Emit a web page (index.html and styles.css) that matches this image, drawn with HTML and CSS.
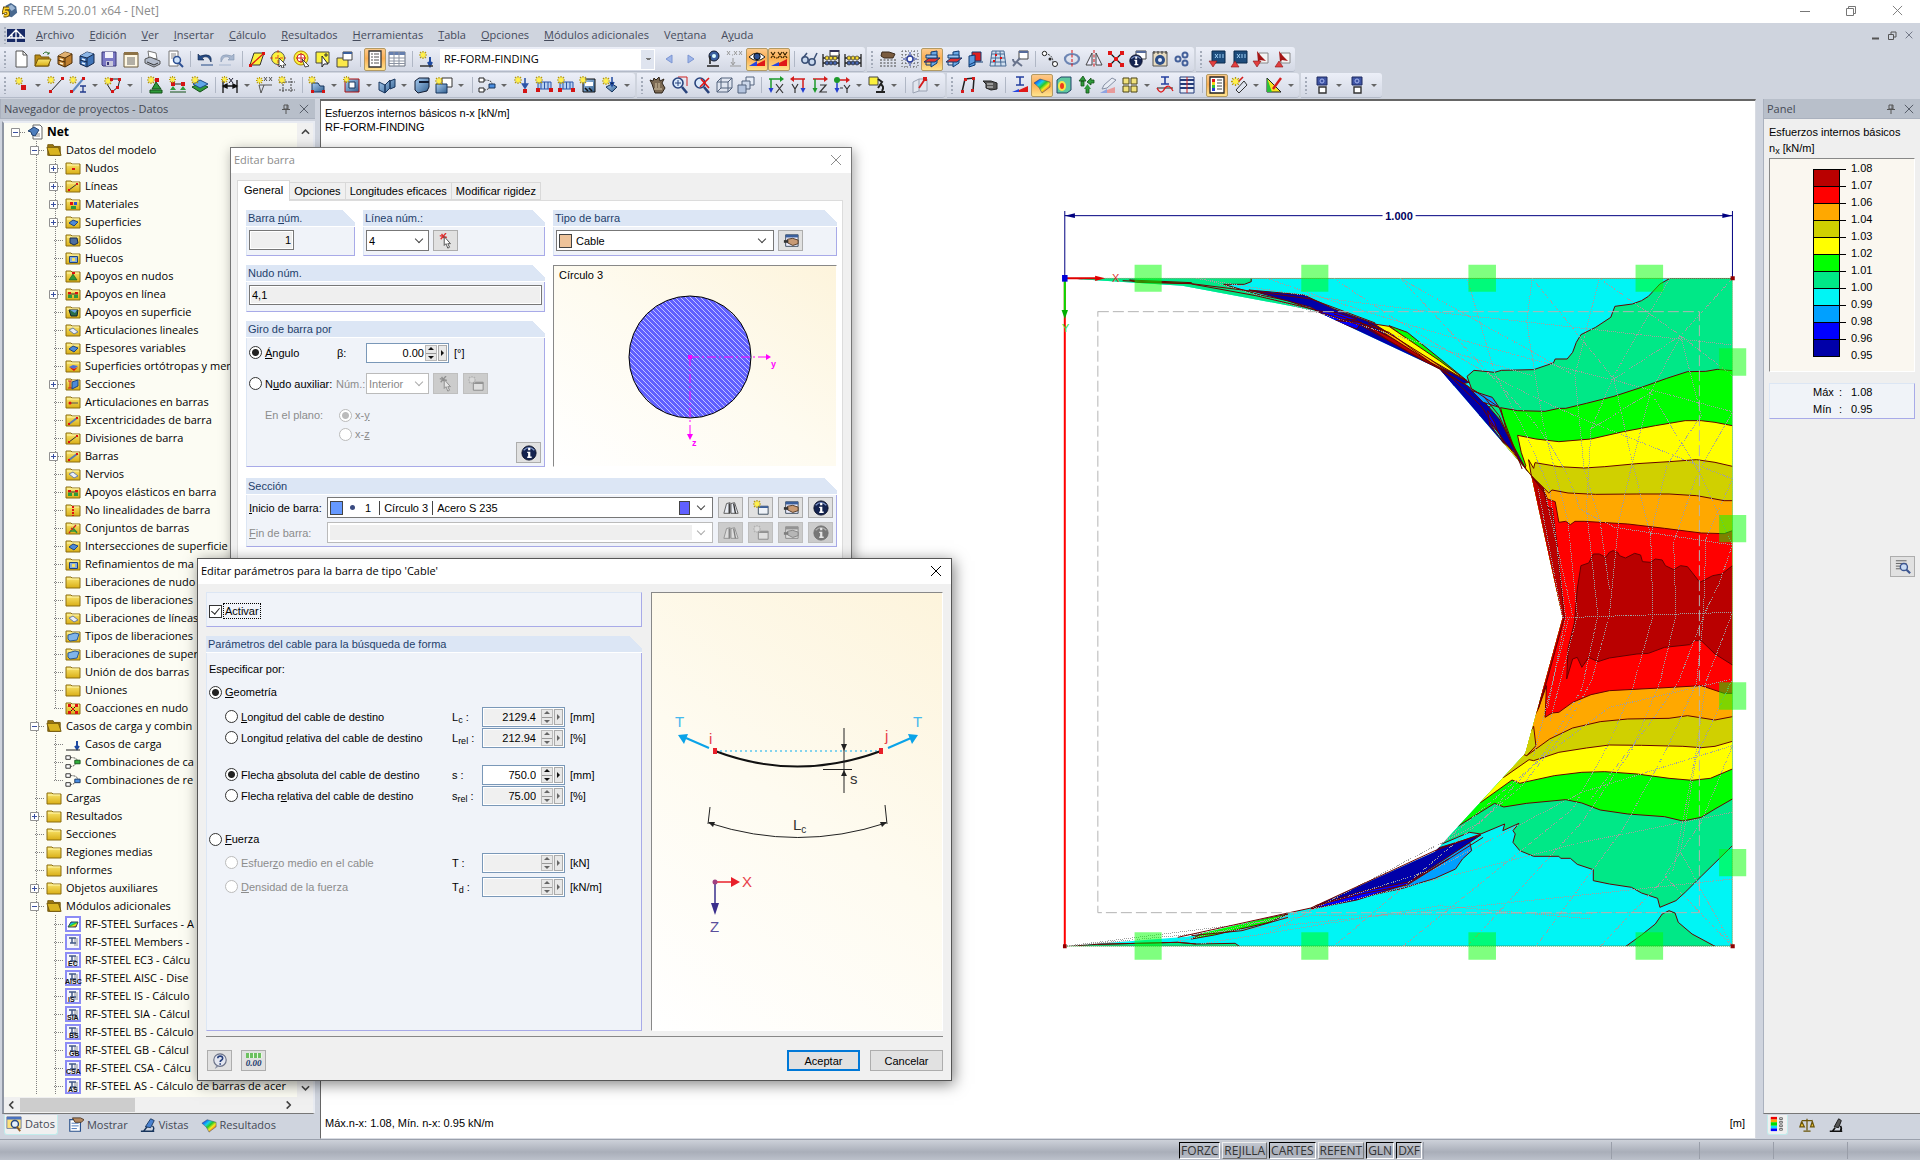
FILE: index.html
```html
<!DOCTYPE html>
<html lang="es">
<head>
<meta charset="utf-8">
<title>RFEM 5.20.01 x64 - [Net]</title>
<link rel="stylesheet" href="styles.css">
</head>
<body>
<svg class="sprite" aria-hidden="true">
<defs>
<linearGradient id="gold" x1="0" y1="0" x2="0" y2="1"><stop offset="0" stop-color="#fbe870"/><stop offset="1" stop-color="#d9ae16"/></linearGradient>
<linearGradient id="steel" x1="0" y1="0" x2="1" y2="1"><stop offset="0" stop-color="#a9cdf2"/><stop offset="1" stop-color="#33608f"/></linearGradient>
<linearGradient id="rainbow" x1="0" y1="0" x2="1" y2="1"><stop offset=".1" stop-color="#1530ff"/><stop offset=".35" stop-color="#16d0e8"/><stop offset=".5" stop-color="#28c828"/><stop offset=".65" stop-color="#f6ea20"/><stop offset=".9" stop-color="#f01818"/></linearGradient>
</defs>
<symbol id="star" viewBox="0 0 8 8"><path d="M4 0v8M0 4h8M1 1l6 6M7 1L1 7" stroke="#b79a00" stroke-width="1.2"/><circle cx="4" cy="4" r="2.4" fill="#fff04a"/></symbol>
<symbol id="app" viewBox="0 0 18 18"><path d="M4 3l6-3 6 4 1 7-6 5-4-1z" fill="#49698f"/><path d="M6 4l5-2 4 4-4 3z" fill="#9db6d3"/><path d="M8 6H3L2 10q5-2 5 2 0 3-5 2" fill="none" stroke="#5b4300" stroke-width="4"/><path d="M8 6H3L2 10q5-2 5 2 0 3-5 2" fill="none" stroke="#ffd22a" stroke-width="2"/></symbol>
<symbol id="logo" viewBox="0 0 18 13"><path d="M0 0h18v13H0z" fill="#182a66"/><path d="M0 9h18M9 0v13M9 1L1 9M9 1l8 8M5 5v4M13 5v4" stroke="#fff" stroke-width="1.3"/></symbol>
<symbol id="new" viewBox="0 0 18 18"><path d="M4 1h7l4 4v12H4z" fill="#fff" stroke="#555"/><path d="M11 1v4h4" fill="none" stroke="#555"/></symbol>
<symbol id="open" viewBox="0 0 18 18"><path d="M1 5h5l1 2h8v9H1z" fill="#b88a14" stroke="#74560a"/><path d="M4 9h13l-3 7H1z" fill="url(#gold)" stroke="#74560a"/><path d="M9 4q3-4 6 0m0-2v2h-2" fill="none" stroke="#2a6f2a"/></symbol>
<symbol id="drawer" viewBox="0 0 18 18"><path d="M2 6l7-4 7 2v9l-7 4-7-3z" fill="#c08030" stroke="#4a2c08"/><path d="M2 6l7-4 7 2-7 4z" fill="#e0b070"/><path d="M2 6l7 2v9M9 8l7-4M2 10l7 2" fill="none" stroke="#4a2c08"/><path d="M4 9l3 1M4 13l3 1" stroke="#fff0c8" stroke-width="1.4"/></symbol>
<symbol id="drawerb" viewBox="0 0 18 18"><path d="M2 6l7-4 7 2v9l-7 4-7-3z" fill="#3f74b8" stroke="#14284c"/><path d="M2 6l7-4 7 2-7 4z" fill="#8db6e6"/><path d="M2 6l7 2v9M9 8l7-4M2 10l7 2" fill="none" stroke="#14284c"/><path d="M4 9l3 1M4 13l3 1" stroke="#e4f0ff" stroke-width="1.4"/></symbol>
<symbol id="save" viewBox="0 0 18 18"><path d="M2 2h14v14H3l-1-1z" fill="#7a78c4" stroke="#3a3878"/><path d="M5 2h8v6H5z" fill="#f2f2fa"/><path d="M6 11h7v5H6z" fill="#c9c9dc"/><path d="M7 12h2v3H7z" fill="#3a3878"/></symbol>
<symbol id="report" viewBox="0 0 18 18"><path d="M2 3h14v14H2z" fill="#fff8e4" stroke="#6a5a3a"/><path d="M2 2h14v3H2z" fill="#8d7246"/><path d="M5 8h8M5 10h8M5 12h8M5 14h8" stroke="#666"/></symbol>
<symbol id="print" viewBox="0 0 18 18"><path d="M4 1l8 2 1 6-8-1z" fill="#fff" stroke="#777"/><path d="M1 9l5-2 10 4v3l-6 3-9-4z" fill="#b4bccb" stroke="#555"/><path d="M3 12l7 3 4-2" fill="none" stroke="#333"/></symbol>
<symbol id="preview" viewBox="0 0 18 18"><path d="M3 1h9v15H3z" fill="#fff" stroke="#777"/><path d="M5 4h5M5 6h5M5 8h3" stroke="#888"/><circle cx="11" cy="10" r="3.5" fill="#cfe3fa" stroke="#2c4f92" stroke-width="1.5"/><path d="M13 13l4 4" stroke="#2c4f92" stroke-width="2"/></symbol>
<symbol id="undo" viewBox="0 0 18 18"><path d="M2 4v6h6L6 8q6-4 9 4 2-10-11-6z" fill="#244a86" stroke="#14284c" stroke-width=".6"/><path d="M5 15h12" stroke="#244a86"/></symbol>
<symbol id="redo" viewBox="0 0 18 18"><path d="M16 4v6h-6l2-2q-6-4-9 4-2-10 11-6z" fill="#a9b8d0" stroke="#8193ae" stroke-width=".6"/><path d="M1 15h12" stroke="#a9b8d0"/></symbol>
<symbol id="selpoly" viewBox="0 0 18 18"><path d="M2 15L6 3h10l-4 12z" fill="#fbf23c" stroke="#333"/><path d="M3 15L15 4" stroke="#d11" stroke-width="1.2"/><path d="M1 14h3v3H1zM14 2h3v3h-3z" fill="#d11"/></symbol>
<symbol id="selcirc" viewBox="0 0 18 18"><circle cx="8" cy="8" r="6.5" fill="#fbf23c" stroke="#555"/><path d="M8 0v16M0 8h16" stroke="#e04a20" stroke-dasharray="3 2"/><path d="M9 8l7 7h-3l1 3-2 0-1-3-2 2z" fill="#fff" stroke="#222" stroke-width=".8"/></symbol>
<symbol id="seltarget" viewBox="0 0 18 18"><circle cx="9" cy="8" r="7" fill="#fbf23c" stroke="#b38a00"/><circle cx="9" cy="8" r="4" fill="#fff" stroke="#c22"/><path d="M9 3v10M4 8h10" stroke="#c22"/><path d="M10 9l7 7-4 1z" fill="#fff" stroke="#222" stroke-width=".8"/></symbol>
<symbol id="selwin" viewBox="0 0 18 18"><path d="M2 2h13v11H2z" fill="#fbf23c" stroke="#444"/><path d="M8 6l6 8-4 0-2 3z" fill="#fff" stroke="#222"/><path d="M12 3v4M10 5h4" stroke="#333"/></symbol>
<symbol id="newwin" viewBox="0 0 18 18"><path d="M1 8h11v9H1z" fill="#fbe94a" stroke="#444"/><path d="M7 2h9v8H7z" fill="#fff" stroke="#444"/><path d="M7 2h9v2H7z" fill="#3a5f9c"/></symbol>
<symbol id="navi" viewBox="0 0 18 18"><path d="M3 1h12v16H3z" fill="#fff" stroke="#333" stroke-width="1.3"/><path d="M5 4h2M5 7h2M5 10h2M5 13h2M8 4h5M8 7h5M8 10h5M8 13h5" stroke="#555" stroke-width="1.2"/></symbol>
<symbol id="grid" viewBox="0 0 18 18"><path d="M1 2h16v14H1z" fill="#fff" stroke="#68707e"/><path d="M1 2h16v3H1z" fill="#667fae"/><path d="M6 2v14M11 2v14M1 8h16M1 11h16M1 13.500h16" stroke="#8b93a2"/></symbol>
<symbol id="load" viewBox="0 0 18 18"><use href="#star" x="1" y="1" width="8" height="8"/><path d="M12 7v7M10 12l2 4 2-4" stroke="#1f4aa0" stroke-width="2" fill="#1f4aa0"/><path d="M2 16h13" stroke="#333" stroke-width="1.500"/></symbol>
<symbol id="prev" viewBox="0 0 18 18"><path d="M12 5v8L6 9z" fill="#9fb6ea" stroke="#7d96d2"/></symbol>
<symbol id="next" viewBox="0 0 18 18"><path d="M6 5v8l6-4z" fill="#9fb6ea" stroke="#7d96d2"/></symbol>
<symbol id="eyep" viewBox="0 0 18 18"><circle cx="10" cy="6" r="5" fill="#3a5fa0" stroke="#10182c"/><circle cx="10" cy="6" r="2" fill="#dff"/><path d="M6 6v8M3 16h12" stroke="#222" stroke-width="1.600"/></symbol>
<symbol id="xg" viewBox="0 0 18 18"><path d="M1 1l3 4M4 1L1 5M6 5h1M8 1l3 4M11 1L8 5M13 1l3 4M16 1l-3 4M7 8v6M5 12l2 3 2-3M4 16h11" stroke="#999" fill="none"/></symbol>
<symbol id="eye" viewBox="0 0 18 18"><path d="M1 7q8-8 16 0-8 7-16 0z" fill="#fff" stroke="#222"/><circle cx="9" cy="6.500" r="3.200" fill="#2c4f92" stroke="#111"/><path d="M1 16L9 11v5z" fill="#2646e0"/><path d="M9 16v-2l8-4v6z" fill="#e01818"/></symbol>
<symbol id="xxx" viewBox="0 0 18 18"><path d="M1 2l4 6M5 2L1 8M6 8h1.500M8 2l4 6M12 2L8 8M13 2l4 6M17 2l-4 6" stroke="#3a2400" stroke-width="1.200"/><path d="M1 16l8-4v4z" fill="#2646e0"/><path d="M9 16v-3l8-4v7z" fill="#e01818"/></symbol>
<symbol id="glass" viewBox="0 0 18 18"><circle cx="5" cy="10" r="3.200" fill="#c8d8ee" stroke="#3d5278" stroke-width="1.600"/><circle cx="12" cy="12" r="3.200" fill="#c8d8ee" stroke="#3d5278" stroke-width="1.600"/><path d="M3 8l4-5M14 9l3-6" stroke="#3d5278" stroke-width="1.600"/></symbol>
<symbol id="abacus" viewBox="0 0 18 18"><path d="M1 4v13M17 4v13M1 8h16M1 13h16" stroke="#222" stroke-width="1.300"/><g fill="#f3d52e" stroke="#333" stroke-width=".7"><circle cx="5" cy="8" r="2"/><circle cx="9" cy="8" r="2"/><circle cx="13" cy="8" r="2"/></g><g fill="#4765ad" stroke="#222" stroke-width=".7"><circle cx="5" cy="13" r="2"/><circle cx="9" cy="13" r="2"/><circle cx="13" cy="13" r="2"/></g></symbol>
<symbol id="abacus2" viewBox="0 0 18 18"><use href="#abacus" width="18" height="18"/><path d="M8 0h9v6H8z" fill="#fff" stroke="#333"/><path d="M8 0h9v2H8z" fill="#335"/></symbol>
<symbol id="hand" viewBox="0 0 18 18"><path d="M3 2h7l6 2-2 4H5L2 6z" fill="#7a5c40" stroke="#3a2a1c"/><path d="M1 10h16M1 13h16M1 16h16" stroke="#444" stroke-dasharray="2 1.500"/></symbol>
<symbol id="snap" viewBox="0 0 18 18"><path d="M1 1h16v16H1zM5 1v16M13 1v16M1 5h16M1 13h16" fill="none" stroke="#555" stroke-dasharray="1 2"/><path d="M9 2v14M2 9h14" stroke="#2c3f9c"/><circle cx="9" cy="9" r="3" fill="#fff" stroke="#2c3f9c" stroke-width="1.400"/></symbol>
<symbol id="planes" viewBox="0 0 18 18"><path d="M8 2l6-1v12l-6 4z" fill="#6aa9e6" stroke="#103a70"/><path d="M1 12l5-4h11l-5 4z" fill="#e03030" stroke="#103a70"/><path d="M3 5h11v3H3z" fill="#9cc8f4" stroke="#103a70"/><path d="M3 12v3h5" fill="none" stroke="#103a70"/></symbol>
<symbol id="planer" viewBox="0 0 18 18"><path d="M5 2h9v9H5z" fill="#e02020" stroke="#103a70"/><path d="M2 6l6-1v10l-6 2z" fill="#5c9ce0" stroke="#103a70"/><path d="M2 15l6-3h8" fill="none" stroke="#103a70"/></symbol>
<symbol id="mesh" viewBox="0 0 18 18"><path d="M3 1h12l2 15H1zM2 8h14M2 12h15M7 1L6 16M11 1l1 15M3 4h12" fill="#cfdff0" stroke="#476992"/><path d="M6 4h2v2H6zM11 7h2v2h-2zM4 10h2v2H4z" fill="#d11"/></symbol>
<symbol id="tools" viewBox="0 0 18 18"><path d="M8 1h9v8H8z" fill="#fff" stroke="#444"/><path d="M8 1h9v2H8z" fill="#556a9a"/><path d="M2 16l7-8M2 9q0 4 4 3l5 4" stroke="#69748c" stroke-width="2" fill="none"/></symbol>
<symbol id="nodes" viewBox="0 0 18 18"><path d="M4 4q8 0 8 9" fill="none" stroke="#333" stroke-dasharray="2 1"/><circle cx="3.500" cy="3.500" r="2.200" fill="#fff" stroke="#222"/><circle cx="9" cy="9" r="1.500" fill="#222"/><circle cx="14" cy="14" r="2.500" fill="#fff" stroke="#222"/></symbol>
<symbol id="rotate" viewBox="0 0 18 18"><ellipse cx="9" cy="9" rx="7" ry="5" fill="none" stroke="#6d86b4" stroke-width="2.200"/><path d="M9 0v18" stroke="#d11" stroke-dasharray="3 1.500"/></symbol>
<symbol id="mirror" viewBox="0 0 18 18"><path d="M7 3v12H1zM11 3v12h6z" fill="#eef" stroke="#444"/><path d="M9 0v18" stroke="#d11" stroke-dasharray="3 1.500"/></symbol>
<symbol id="xnode" viewBox="0 0 18 18"><path d="M3 3l12 12M15 3L3 15" stroke="#111" stroke-width="1.200"/><path d="M1 1h4v4H1zM13 1h4v4h-4zM1 13h4v4H1zM13 13h4v4h-4zM7 7h4v4H7z" fill="#e01616"/></symbol>
<symbol id="info" viewBox="0 0 18 18"><circle cx="9" cy="9" r="8" fill="#14234f" stroke="#0a1028"/><path d="M3 6q6-6 12 0" fill="none" stroke="#7f95c8" stroke-width="1.500"/><path d="M8 3.500h2.500v2.500H8zM7 7.500h3.500v5.500H12v1.500H7V13h1V9H7z" fill="#fff"/></symbol>
<symbol id="infow" viewBox="0 0 18 18"><path d="M7 1h10v8H7z" fill="#fff" stroke="#444"/><path d="M7 1h10v2H7z" fill="#556a9a"/><use href="#info" x="0" y="4" width="14" height="14"/></symbol>
<symbol id="clock" viewBox="0 0 18 18"><path d="M2 2h14v14H2z" fill="#e8dcc0" stroke="#555"/><circle cx="9" cy="10" r="5" fill="#2b4d88"/><circle cx="9" cy="10" r="2" fill="#e8eefa"/><path d="M3 1v3M7 1v3M11 1v3M15 1v3" stroke="#333"/></symbol>
<symbol id="gears" viewBox="0 0 18 18"><g fill="none" stroke="#44609a" stroke-width="2"><circle cx="5" cy="9" r="2.500" /><circle cx="12" cy="5" r="2.500"/><circle cx="12" cy="13" r="2.500"/></g></symbol>
<symbol id="xydown" viewBox="0 0 18 18"><path d="M4 1h13v12H4z" fill="#1d4c7c" stroke="#0b2a4c"/><path d="M7 4l3 4M10 4L7 8M12 4v4M15 4v4" stroke="#9fd0f5"/><path d="M1 11h8l-4 6z" fill="#e24040" stroke="#8a1414" stroke-width=".6"/></symbol>
<symbol id="xyup" viewBox="0 0 18 18"><path d="M4 1h13v12H4z" fill="#1d4c7c" stroke="#0b2a4c"/><path d="M7 4l3 4M10 4L7 8M12 4v4M15 4v4" stroke="#9fd0f5"/><path d="M1 17h8l-4-6z" fill="#e24040" stroke="#8a1414" stroke-width=".6"/></symbol>
<symbol id="pdfd" viewBox="0 0 18 18"><path d="M7 3h9v10H7z" fill="#f4f4f4" stroke="#888"/><path d="M5 1l4 5 5 5-6-1-2 2z" fill="#a41414"/><path d="M1 11h8l-4 6z" fill="#e24040" stroke="#8a1414" stroke-width=".6"/></symbol>
<symbol id="pdfu" viewBox="0 0 18 18"><path d="M7 3h9v10H7z" fill="#f4f4f4" stroke="#888"/><path d="M5 1l4 5 5 5-6-1-2 2z" fill="#a41414"/><path d="M1 17h8l-4-6z" fill="#e24040" stroke="#8a1414" stroke-width=".6"/></symbol>
<symbol id="node" viewBox="0 0 18 18"><use href="#star" x="3" y="1" width="8" height="8"/><path d="M9 9h5v5H9z" fill="#d41414"/></symbol>
<symbol id="line" viewBox="0 0 18 18"><use href="#star" x="0" y="0" width="8" height="8"/><path d="M4 15L15 3" stroke="#222"/><path d="M2 14h3v3H2zM14 1h3v3h-3z" fill="#d41414"/></symbol>
<symbol id="member" viewBox="0 0 18 18"><use href="#star" x="0" y="0" width="8" height="8"/><path d="M3 16L14 3" stroke="#5e87c0" stroke-width="2"/><path d="M13 1h3v3h-3zM1 14h3v3H1z" fill="#d41414"/><path d="M11 10h6M11 16h6M14 10v6" stroke="#223a8c" stroke-width="1.300"/></symbol>
<symbol id="arc" viewBox="0 0 18 18"><path d="M3 8l5 8 6-5 2-8H8" stroke="#222" fill="none"/><use href="#star" x="0" y="1" width="8" height="8"/><path d="M14 2h3v3h-3zM7 14h3v3H7zM12 10h3v3h-3zM6 2h3v3H6z" fill="#d41414"/></symbol>
<symbol id="support" viewBox="0 0 18 18"><path d="M9 6l5 7H5zM3 14h12v3H3z" fill="#2f9a3a" stroke="#145018"/><path d="M8 2h4v4H8z" fill="#d41414"/><use href="#star" x="0" y="0" width="8" height="8"/></symbol>
<symbol id="lsupport" viewBox="0 0 18 18"><path d="M3 8h12" stroke="#222"/><path d="M4 10l3 4H1zM14 10l3 4h-6z" fill="#2f9a3a"/><path d="M2 6h4v4H2zM12 6h4v4h-4z" fill="#d41414"/><path d="M1 16h16" stroke="#145018"/><use href="#star" x="0" y="0" width="7" height="7"/></symbol>
<symbol id="ssupport" viewBox="0 0 18 18"><path d="M1 11l8-4 8 4-8 5z" fill="#2f9a3a" stroke="#145018"/><path d="M2 8l7-4 8 4-8 4z" fill="#5fa6e8" stroke="#1c4b86"/><use href="#star" x="0" y="0" width="8" height="8"/></symbol>
<symbol id="dim" viewBox="0 0 18 18"><path d="M2 4v13M16 4v13M2 10h14M2 10l4-2v4zM16 10l-4-2v4z" stroke="#111" stroke-width="1.300"/><path d="M8 2l4 5M12 2L8 7" stroke="#223"/><use href="#star" x="0" y="0" width="7" height="7"/></symbol>
<symbol id="xx" viewBox="0 0 18 18"><use href="#star" x="0" y="1" width="7" height="7"/><path d="M8 1l3 4M11 1L8 5M13 1l3 4M16 1l-3 4M3 9h13M3 9l2 8M8 9l-3 8" stroke="#555" fill="none"/></symbol>
<symbol id="guides" viewBox="0 0 18 18"><path d="M5 2v15M13 2v15M1 6h16M1 14h16" stroke="#444" stroke-dasharray="2 1"/><use href="#star" x="0" y="0" width="8" height="8"/></symbol>
<symbol id="shape" viewBox="0 0 18 18"><path d="M4 7h6l2 3h4v6H4z" fill="url(#steel)" stroke="#17345c"/><path d="M14 14h3v3h-3zM3 14h3v3H3z" fill="#d41414"/><use href="#star" x="0" y="0" width="8" height="8"/></symbol>
<symbol id="hole" viewBox="0 0 18 18"><path d="M2 3h14v13H2z" fill="url(#steel)" stroke="#b01212"/><path d="M6 6h6v6H6z" fill="#fff" stroke="#17345c"/><use href="#star" x="0" y="0" width="7" height="7"/></symbol>
<symbol id="fold" viewBox="0 0 18 18"><path d="M1 6l6 3v8l-6-3zM7 9l5-5v8l-5 5zM12 5l5-2v8l-5 2z" fill="url(#steel)" stroke="#17345c"/></symbol>
<symbol id="solid" viewBox="0 0 18 18"><path d="M2 5l4-3h10v9l-2 4-9 2-3-3z" fill="url(#steel)" stroke="#101a30"/><path d="M6 6h10" stroke="#101a30" stroke-width="2"/></symbol>
<symbol id="solids" viewBox="0 0 18 18"><path d="M7 2h10v9H7z" fill="#fff" stroke="#333"/><path d="M1 8h11v9H1z" fill="url(#steel)" stroke="#17345c"/><use href="#star" x="0" y="1" width="8" height="8"/></symbol>
<symbol id="combo" viewBox="0 0 18 18"><path d="M1 2h5v4H1zM1 12h5v4H1z" fill="#fff" stroke="#222"/><path d="M6 4q8 0 8 4M6 14q4 0 6-3" fill="none" stroke="#333" stroke-dasharray="2 1"/><path d="M11 8h6v4h-6z" fill="#4a8de0" stroke="#17345c"/></symbol>
<symbol id="combog" viewBox="0 0 18 18"><path d="M1 2h5v4H1zM1 12h5v4H1z" fill="#fff" stroke="#222"/><path d="M6 4q8 0 8 4M6 14q4 0 6-3" fill="none" stroke="#333" stroke-dasharray="2 1"/><path d="M11 7h6v4h-6z" fill="#2fae3a" stroke="#145018"/></symbol>
<symbol id="nload" viewBox="0 0 18 18"><use href="#star" x="1" y="0" width="8" height="8"/><path d="M12 2v7M9.500 8l2.500 4 2.500-4z" stroke="#2c55a8" stroke-width="1.600" fill="#2c55a8"/><path d="M10 13h4v4h-4z" fill="#d41414"/></symbol>
<symbol id="lload" viewBox="0 0 18 18"><path d="M3 6h13v7H3z" fill="#b7d2f2" stroke="#2c55a8"/><path d="M6 6v7M9.500 6v7M13 6v7" stroke="#2c55a8"/><path d="M1 12h4v4H1zM14 12h4v4h-4z" fill="#d41414"/><use href="#star" x="0" y="0" width="8" height="8"/></symbol>
<symbol id="vload" viewBox="0 0 18 18"><path d="M4 3h12v13H4z" fill="url(#steel)" stroke="#111"/><path d="M6 6h8v4H6z" fill="#fff"/><path d="M6 12l3 3M10 12l3 3" stroke="#111" stroke-width="1.500"/><use href="#star" x="0" y="0" width="8" height="8"/></symbol>
<symbol id="gload" viewBox="0 0 18 18"><path d="M5 11l6-3 5 3-5 5z" fill="url(#steel)" stroke="#17345c"/><path d="M11 1v6M9 6l2 4 2-4" stroke="#1f4aa0" stroke-width="1.500"/><use href="#star" x="1" y="1" width="8" height="8"/></symbol>
<symbol id="pan" viewBox="0 0 18 18"><path d="M3 8L1 4l3 1 1-3 2 2 3-3 1 4 4-2-2 4 3 5-3 5H6z" fill="#7c6a54" stroke="#2e2419"/><path d="M7 7v5M10 7v5M5 13h8" stroke="#d8c8a8"/></symbol>
<symbol id="zoomw" viewBox="0 0 18 18"><path d="M7 1h9v9" fill="none" stroke="#c22"/><circle cx="7" cy="7" r="5" fill="#d9e9fb" stroke="#29437c" stroke-width="1.600"/><path d="M11 11l5 6" stroke="#29437c" stroke-width="2.600"/><path d="M7 4v6M4 7h6" stroke="#29437c"/></symbol>
<symbol id="zoomx" viewBox="0 0 18 18"><circle cx="7" cy="7" r="5" fill="#d9e9fb" stroke="#29437c" stroke-width="1.600"/><path d="M11 11l5 6" stroke="#29437c" stroke-width="2.600"/><path d="M8 3l8 9M16 2L7 11" stroke="#e01616" stroke-width="1.600"/></symbol>
<symbol id="cube" viewBox="0 0 18 18"><path d="M2 6l4-4h11v10l-4 4H2zM2 6h11v10M13 6l4-4M6 2v10h11M6 12l-4 4" fill="#dfe6f2" fill-opacity=".6" stroke="#53627c"/></symbol>
<symbol id="cubes" viewBox="0 0 18 18"><path d="M9 1h8v8H9z" fill="#e6ecf6" stroke="#53627c"/><path d="M5 5h8v8H5z" fill="#cdd8ea" stroke="#53627c"/><path d="M1 9h8v8H1z" fill="#b4c4de" stroke="#53627c"/></symbol>
<symbol id="viewx" viewBox="0 0 18 18"><path d="M2 3h12M4 3v12" stroke="#1d9a2b" stroke-width="1.500"/><path d="M13 0l4 3-4 3z" fill="#1d9a2b"/><path d="M1.500 12h5L4 17z" fill="#2440d0"/><path d="M9 8l7 9M16 8l-7 9" stroke="#333" stroke-width="1.200"/></symbol>
<symbol id="viewy" viewBox="0 0 18 18"><path d="M4 3h12M14 3v12" stroke="#d41c1c" stroke-width="1.500"/><path d="M5 0L1 3l4 3z" fill="#d41c1c"/><path d="M11.500 12h5L14 17z" fill="#2440d0"/><path d="M3 8l3 5 3-5M6 13v4" stroke="#333" stroke-width="1.200" fill="none"/></symbol>
<symbol id="viewz" viewBox="0 0 18 18"><path d="M2 3h12" stroke="#d41c1c" stroke-width="1.500"/><path d="M4 3v12" stroke="#1d9a2b" stroke-width="1.500"/><path d="M13 0l4 3-4 3z" fill="#d41c1c"/><path d="M1.500 12h5L4 17z" fill="#1d9a2b"/><path d="M9 9h6l-6 7h7" fill="none" stroke="#333" stroke-width="1.200"/></symbol>
<symbol id="viewm" viewBox="0 0 18 18"><path d="M5 4h9" stroke="#d41c1c" stroke-width="1.500"/><path d="M4 4v11" stroke="#2440d0" stroke-width="1.500"/><path d="M13 1l4 3-4 3z" fill="#d41c1c"/><path d="M1.500 12h5L4 17z" fill="#2440d0"/><circle cx="4" cy="4" r="3" fill="#1d9a2b"/><path d="M7 12h3M11 9l3 4 3-4M14 13v4" fill="none" stroke="#333" stroke-width="1.200"/></symbol>
<symbol id="micro" viewBox="0 0 18 18"><path d="M1 1h9v8H1z" fill="#fbf03c" stroke="#444"/><path d="M10 3l4 3-4 6M8 16h9M12 8q5 2 2 7" fill="none" stroke="#222" stroke-width="2"/></symbol>
<symbol id="clip" viewBox="0 0 18 18"><path d="M2 6l6-3v12l-6 2zM8 3h8v12H8" fill="#e2e6ee" stroke="#9aa2b2"/><path d="M8 12l6-9" stroke="#d41c1c" stroke-width="1.800"/><path d="M12 1h4v4h-4z" fill="#d41c1c"/></symbol>
<symbol id="frame" viewBox="0 0 18 18"><path d="M3 16L6 3l9-1-1 13" fill="none" stroke="#222" stroke-width="1.500"/><path d="M2 14h3v3H2zM5 2h3v3H5zM13 1h3v3h-3zM12 13h3v3h-3z" fill="#d41c1c"/></symbol>
<symbol id="cyl" viewBox="0 0 18 18"><path d="M2 5h8l6 2v6l-6 1-5-2V8z" fill="#555" stroke="#222"/><path d="M6 8h6M6 11h6" stroke="#ddd"/></symbol>
<symbol id="defm" viewBox="0 0 18 18"><path d="M5 1h8M9 1v8M5 9h8" stroke="#2440a0" stroke-width="1.600"/><path d="M1 16l7-3v3z" fill="#2646e0"/><path d="M8 16v-2l9-4v6z" fill="#e01818"/></symbol>
<symbol id="rain" viewBox="0 0 18 18"><path d="M1 7l6-4 10 3v5l-8 6q-2-6-8-10z" fill="url(#rainbow)" stroke="#345" stroke-width=".5"/></symbol>
<symbol id="raincube" viewBox="0 0 18 18"><path d="M2 4l4-3h10v13l-4 3H2z" fill="#5fc8a0" stroke="#246"/><ellipse cx="7" cy="10" rx="4" ry="5" fill="#f4e84a"/><ellipse cx="7" cy="10" rx="2" ry="3" fill="#ee3a1c"/></symbol>
<symbol id="reac" viewBox="0 0 18 18"><path d="M4 5h3v5H4zM2 5l4-5 3 5zM10 6l4-4v2h3v3h-3v2zM9 12h3v5H9z" fill="#2f9a3a" stroke="#145018" stroke-width=".8"/><path d="M7 13h7l-3.500-5z" fill="#2f9a3a"/></symbol>
<symbol id="pencil" viewBox="0 0 18 18"><path d="M5 9l8-7 4 2-9 8-5 1z" fill="#e8ecf4" stroke="#8790a4"/><path d="M1 17l7-4v4z" fill="#8fa4e0"/><path d="M8 17v-3l8-3v6z" fill="#e89a9a"/></symbol>
<symbol id="tiles" viewBox="0 0 18 18"><path d="M2 2h6v6H2zM10 2h6v6h-6zM2 10h6v6H2zM10 10h6v6h-6z" fill="#f1e27c" stroke="#4a4214"/></symbol>
<symbol id="isec" viewBox="0 0 18 18"><path d="M5 1h8M9 1v7M5 8h8" stroke="#2440a0" stroke-width="1.600"/><path d="M1 12h16" stroke="#222"/><path d="M1 12q4 8 8 0 4-5 8 3" fill="none" stroke="#e01818" stroke-width="1.300"/></symbol>
<symbol id="tab3" viewBox="0 0 18 18"><path d="M2 1h14v16H2z" fill="#e9eef8" stroke="#233a78"/><path d="M2 4h14M2 8h14M2 12h14" stroke="#233a78" stroke-width="2"/><path d="M9 1v16" stroke="#c22"/></symbol>
<symbol id="panel" viewBox="0 0 18 18"><path d="M2 1h14v16H2z" fill="#fff" stroke="#222" stroke-width="1.300"/><path d="M4 3h3v3H4z" fill="#e01818"/><path d="M4 6h3v3H4z" fill="#f5d516"/><path d="M4 9h3v3H4z" fill="#2bbf3a"/><path d="M4 12h3v3H4z" fill="#2440d0"/><path d="M9 4h5M9 7h5M9 10h5M9 13h5" stroke="#444"/></symbol>
<symbol id="wand" viewBox="0 0 18 18"><path d="M13 1L8 6" stroke="#d41c1c" stroke-width="1.600"/><path d="M6 14l8-9 3 4-8 8z" fill="#dde3ee" stroke="#333"/><use href="#star" x="1" y="1" width="9" height="9"/></symbol>
<symbol id="spectrum" viewBox="0 0 18 18"><path d="M2 2v14h14z" fill="#f5e520" stroke="#222"/><path d="M2 2v14h5z" fill="#2bbf3a"/><path d="M8 13L16 2" stroke="#d41c1c" stroke-width="2.400"/></symbol>
<symbol id="dev" viewBox="0 0 18 18"><path d="M4 1h10v8H4z" fill="#3f54a4" stroke="#1e2a60"/><circle cx="9" cy="5" r="2" fill="none" stroke="#a9b8f0"/><path d="M6 11h7v6H6z" fill="#fff" stroke="#333" stroke-width="1.400"/></symbol>
<symbol id="fold0" viewBox="0 0 16 16"><path d="M1 3h5l1 1h8v10H1z" fill="url(#gold)" stroke="#8a6c10"/><path d="M2 5h12" stroke="#fff6b0"/></symbol>
<symbol id="foldo" viewBox="0 0 18 16"><path d="M2 2h6l1 2h7v10H2z" fill="#a07c10" stroke="#6e540a"/><path d="M1 5h13l3 9H4z" fill="#d9b422" stroke="#6e540a"/></symbol>
<symbol id="net" viewBox="0 0 16 16"><path d="M6 1h7l2 2v12H6z" fill="#fff" stroke="#666"/><path d="M8 10h5M8 12h5" stroke="#888"/><path d="M1 7l6-4 5 3-4 6-3-1-1-3z" fill="#4d7dbc" stroke="#22406e"/></symbol>
<symbol id="plus" viewBox="0 0 9 9"><path d="M.5.5h8v8h-8z" fill="#fff" stroke="#919191"/><path d="M2 4.500h5M4.500 2v5" stroke="#3a50a0"/></symbol>
<symbol id="minus" viewBox="0 0 9 9"><path d="M.5.5h8v8h-8z" fill="#fff" stroke="#919191"/><path d="M2 4.500h5" stroke="#3a50a0"/></symbol>
<symbol id="f-node" viewBox="0 0 16 16"><use href="#fold0" width="16" height="16"/><path d="M7 8h3v2H7z" fill="#d11"/></symbol>
<symbol id="f-line" viewBox="0 0 16 16"><use href="#fold0" width="16" height="16"/><path d="M4 12l8-6" stroke="#333"/><path d="M3 11h2v2H3zM11 5h2v2h-2z" fill="#d11"/></symbol>
<symbol id="f-mat" viewBox="0 0 16 16"><use href="#fold0" width="16" height="16"/><path d="M5 6h3v3H5z" fill="#d11"/><path d="M9 6h3v3H9z" fill="#2a54d0"/><path d="M6 10h5v3H6z" fill="#2a9a3a"/></symbol>
<symbol id="f-surf" viewBox="0 0 16 16"><use href="#fold0" width="16" height="16"/><path d="M4 9l4-3 5 2-4 4z" fill="#4d8ad8" stroke="#1e4480"/></symbol>
<symbol id="f-orto" viewBox="0 0 16 16"><use href="#fold0" width="16" height="16"/><path d="M4 9l4-2 5 1-4 3z" fill="#4d6ed8"/><path d="M4 9l5 4 4-4-4 2z" fill="#d11"/></symbol>
<symbol id="f-solid" viewBox="0 0 16 16"><use href="#fold0" width="16" height="16"/><path d="M5 6h7l1 5-4 2-4-2z" fill="#4d6ea0" stroke="#1a2c50"/></symbol>
<symbol id="f-ssup" viewBox="0 0 16 16"><use href="#fold0" width="16" height="16"/><path d="M4 6h9l-1 6H6z" fill="#2a6e4a" stroke="#123"/><path d="M5 6h7l-2 3z" fill="#6aa4e0"/></symbol>
<symbol id="f-hole" viewBox="0 0 16 16"><use href="#fold0" width="16" height="16"/><path d="M4.500 6.500h8v6h-8z" fill="#88aedc" stroke="#1e4480"/><path d="M7 8h3v3H7z" fill="#f6e060"/></symbol>
<symbol id="f-sup" viewBox="0 0 16 16"><use href="#fold0" width="16" height="16"/><path d="M8 6l4 6H4z" fill="#2f9a3a" stroke="#145018" stroke-width=".6"/><path d="M7 4h3v2H7z" fill="#d11"/></symbol>
<symbol id="f-set" viewBox="0 0 16 16"><use href="#fold0" width="16" height="16"/><path d="M4 13l7-8M6 8l6 4" stroke="#c22" stroke-width="1.200"/><path d="M8 8l4 5M5 11h5" stroke="#2a9a3a" stroke-width="1.400"/></symbol>
<symbol id="f-lsup" viewBox="0 0 16 16"><use href="#fold0" width="16" height="16"/><path d="M3 8h10" stroke="#333"/><path d="M3 9h4v3H3zM9 9h4v3H9z" fill="#2f9a3a"/><path d="M3 6h3v2H3zM10 6h3v2h-3z" fill="#d11"/></symbol>
<symbol id="f-rel" viewBox="0 0 16 16"><use href="#fold0" width="16" height="16"/><path d="M4 8l4-2 5 4-4 2z" fill="#e8eefa" stroke="#6e7f9c"/></symbol>
<symbol id="f-bar" viewBox="0 0 16 16"><use href="#fold0" width="16" height="16"/><path d="M4 12l8-6" stroke="#5b7cae" stroke-width="2"/><path d="M3 11h2v2H3zM11 5h2v2h-2z" fill="#d11"/></symbol>
<symbol id="f-sec" viewBox="0 0 16 16"><use href="#fold0" width="16" height="16"/><path d="M3 5h4M3 12h4M5 5v7" stroke="#c22"/><path d="M7 6l6-2v6l-6 3z" fill="#4d8ad8" stroke="#1e4480"/></symbol>
<symbol id="f-art" viewBox="0 0 16 16"><use href="#fold0" width="16" height="16"/><path d="M5 9h8" stroke="#555"/><circle cx="5" cy="9" r="1.500" fill="#d11"/></symbol>
<symbol id="f-nl" viewBox="0 0 16 16"><use href="#fold0" width="16" height="16"/><path d="M8 4v10" stroke="#d11" stroke-width="2" stroke-dasharray="2 1"/></symbol>
<symbol id="f-co" viewBox="0 0 16 16"><use href="#fold0" width="16" height="16"/><path d="M4 5l8 8M12 5l-8 8" stroke="#111"/><path d="M3 4h3v3H3zM10 4h3v3h-3zM3 11h3v3H3zM10 11h3v3h-3zM7 8h2v2H7z" fill="#d11"/></symbol>
<symbol id="f-t" viewBox="0 0 16 16"><use href="#fold0" width="16" height="16"/><path d="M3 7l7-2 4 1-2 6-7 1-2-2z" fill="#7fb4ea" stroke="#2b5a94"/></symbol>
<symbol id="mod" viewBox="0 0 16 16"><path d="M1 1h14v14H1z" fill="#f4f5fb" stroke="#8c8cf5" stroke-width="2"/><path d="M9 4h4v8H9z" fill="#9aa0aa" fill-opacity=".6"/><path d="M4 4h7M7 4v5M5 9h6" stroke="#435a88" stroke-width="1.500"/></symbol>
<symbol id="pin" viewBox="0 0 10 10"><path d="M3 1h4v4H3zM1 5.500h8M5 6v4M6 1v4" fill="none" stroke="#555"/></symbol>
<symbol id="x" viewBox="0 0 12 12"><path d="M1 1l10 10M11 1L1 11" stroke="currentColor" fill="none"/></symbol>
<symbol id="chev" viewBox="0 0 10 6"><path d="M1 1l4 4 4-4" fill="none" stroke="currentColor" stroke-width="1.800"/></symbol>
<symbol id="pick" viewBox="0 0 18 18"><path d="M2 3l8 2M4 1l4 6M9 0L3 7" stroke="#e03030" stroke-width="1.500"/><path d="M7 4v10l2-2 2 5 2-1-2-4h3z" fill="#fff" stroke="#444"/></symbol>
<symbol id="edit" viewBox="0 0 18 18"><path d="M3 2h14v13H3z" fill="#eef" stroke="#345"/><path d="M3 2h14v3H3z" fill="#3a5f9c"/><path d="M5 7l6-1 6 2v4l-6 2-6-3z" fill="#c89a74" stroke="#4a3420"/><path d="M1 8h5v3H1z" fill="#333"/></symbol>
<symbol id="book" viewBox="0 0 18 18"><path d="M1 15L4 4l4-1v12z" fill="#e9edf4" stroke="#555"/><path d="M9 15V4l4-1 4 12z" fill="#e9edf4" stroke="#555"/><path d="M7 4v11M12 4l2 11" stroke="#333" stroke-width="1.500"/></symbol>
<symbol id="newbox" viewBox="0 0 18 18"><path d="M6 7h11v9H6z" fill="#eef2f8" stroke="#345"/><path d="M6 7h11v2H6z" fill="#3a5f9c"/><use href="#star" x="0" y="0" width="9" height="9"/></symbol>
<symbol id="help" viewBox="0 0 18 18"><circle cx="9" cy="8" r="7" fill="#e3e6f0" stroke="#6b7288" stroke-width="1.300"/><path d="M5 14l-2 4 5-3" fill="#8a90a4"/><path d="M6.500 6q0-2.500 2.700-2.500T12 6q0 1.500-1.500 2.200Q9.200 9 9.200 10.200M9.200 11.500v1.800" fill="none" stroke="#27407c" stroke-width="1.800"/></symbol>
<symbol id="lens" viewBox="0 0 18 18"><path d="M1 2h12M1 5h12M1 8h6M1 11h5" stroke="#555"/><circle cx="10" cy="9" r="4" fill="#c9dbf3" stroke="#3d5690" stroke-width="1.600"/><path d="M13 12l4 4" stroke="#3d5690" stroke-width="2.500"/></symbol>
<symbol id="t-data" viewBox="0 0 18 18"><path d="M1 1h16v13H1z" fill="#ffe27a" stroke="#6a7ca0"/><path d="M1 1h16v3H1z" fill="#4a72c0"/><circle cx="10" cy="9" r="4" fill="#e4f0fc" stroke="#27457c" stroke-width="1.600"/><path d="M12 12l4 5" stroke="#8c5a20" stroke-width="2"/></symbol>
<symbol id="t-show" viewBox="0 0 18 18"><path d="M2 3h12v13H2z" fill="#fff" stroke="#29508c" stroke-width="1.300"/><path d="M4 7h8M4 10h8M4 13h6" stroke="#3d6cb4"/><path d="M5 1h9l4 2-3 3H8z" fill="#b48a62" stroke="#4a3420"/></symbol>
<symbol id="t-view" viewBox="0 0 18 18"><path d="M6 11l6-9 4 2-4 8z" fill="#4a82d0" stroke="#17345c"/><path d="M1 16h15M4 16l4-5M14 16q3-3 0-6" stroke="#17345c" stroke-width="1.500" fill="none"/></symbol>
<symbol id="t-leg" viewBox="0 0 18 18"><path d="M2 1h7v3H2z" fill="#e00"/><path d="M2 4h7v3H2z" fill="#fa0"/><path d="M2 7h7v4H2z" fill="#0d0"/><path d="M2 11h7v3H2z" fill="#0df"/><path d="M2 14h7v3H2z" fill="#00f"/><path d="M12 2h3v2h-3zM12 6h3v2h-3zM12 10h3v2h-3zM12 14h3v2h-3z" fill="#fff" stroke="#555"/></symbol>
<symbol id="t-bal" viewBox="0 0 18 18"><path d="M9 2v13M3 4h12M5 16h8M3 5L1 11h5L3 5M15 5l-2 6h4z" fill="#e9c23a" stroke="#6a5408" stroke-width="1.400"/></symbol>
<symbol id="t-mic" viewBox="0 0 18 18"><path d="M7 11l5-9 3 2-3 8z" fill="#555" stroke="#111"/><path d="M2 16h14M5 16l3-4M14 16q2-3 0-6" stroke="#111" stroke-width="1.800" fill="none"/></symbol>
</svg>

<header class="titlebar">
  <svg class="ic"><use href="#app"/></svg><span class="apptitle">RFEM 5.20.01 x64 - [Net]</span>
  <div class="winbtns">
    <button aria-label="Minimizar"><svg width="10" height="10"><path d="M0 5.500h10" stroke="#777"/></svg></button>
    <button aria-label="Restaurar"><svg width="10" height="10"><path d="M.5 2.500h7v7h-7zM2.500 2.500v-2h7v7h-2" fill="none" stroke="#777"/></svg></button>
    <button aria-label="Cerrar"><svg width="11" height="11"><use href="#x"/></svg></button>
  </div>
</header>

<nav class="menubar">
  <i class="grip"></i><svg width="18" height="13" class="mlogo"><use href="#logo"/></svg>
  <a href="#"><u>A</u>rchivo</a><a href="#"><u>E</u>dición</a><a href="#"><u>V</u>er</a><a href="#"><u>I</u>nsertar</a><a href="#"><u>C</u>álculo</a><a href="#"><u>R</u>esultados</a><a href="#"><u>H</u>erramientas</a><a href="#"><u>T</u>abla</a><a href="#"><u>O</u>pciones</a><a href="#"><u>M</u>ódulos adicionales</a><a href="#">Ve<u>n</u>tana</a><a href="#">A<u>y</u>uda</a>
  <div class="mdi">
    <button><svg width="9" height="9"><path d="M1 7.500h7" stroke="#555" stroke-width="2"/></svg></button>
    <button><svg width="9" height="9"><path d="M.5 3.500h5v5h-5zM3 3V1h5v5H6" fill="none" stroke="#555"/></svg></button>
    <button><svg width="8" height="8"><use href="#x"/></svg></button>
  </div>
</nav>

<div class="toolrows">
<div class="toolrow">
  <div class="toolbar"><i class="grip"></i>
    <button class="tb"><svg><use href="#new"/></svg></button><button class="tb"><svg><use href="#open"/></svg></button><button class="tb"><svg><use href="#drawer"/></svg></button><button class="tb"><svg><use href="#drawerb"/></svg></button><button class="tb"><svg><use href="#save"/></svg></button><button class="tb"><svg><use href="#report"/></svg></button><button class="tb"><svg><use href="#print"/></svg></button><button class="tb"><svg><use href="#preview"/></svg></button><i class="sep"></i>
    <button class="tb"><svg><use href="#undo"/></svg></button><button class="tb"><svg><use href="#redo"/></svg></button><i class="sep"></i>
    <button class="tb"><svg><use href="#selpoly"/></svg></button><button class="tb"><svg><use href="#selcirc"/></svg></button><button class="tb"><svg><use href="#seltarget"/></svg></button><button class="tb"><svg><use href="#selwin"/></svg></button><button class="tb"><svg><use href="#newwin"/></svg></button><i class="sep"></i>
    <button class="tb on"><svg><use href="#navi"/></svg></button><button class="tb"><svg><use href="#grid"/></svg></button><i class="sep"></i>
    <button class="tb"><svg><use href="#load"/></svg></button>
    <select class="loadcase" aria-label="Caso de carga"><option>RF-FORM-FINDING</option></select>
    <button class="tb"><svg><use href="#prev"/></svg></button><button class="tb"><svg><use href="#next"/></svg></button><button class="tb"><svg><use href="#eyep"/></svg></button><button class="tb"><svg><use href="#xg"/></svg></button><button class="tb on"><svg><use href="#eye"/></svg></button><button class="tb on"><svg><use href="#xxx"/></svg></button><i class="sep"></i>
    <button class="tb"><svg><use href="#glass"/></svg></button><button class="tb"><svg><use href="#abacus2"/></svg></button><button class="tb"><svg><use href="#abacus"/></svg></button>
  </div>
  <div class="toolbar"><i class="grip"></i>
    <button class="tb"><svg><use href="#hand"/></svg></button><button class="tb"><svg><use href="#snap"/></svg></button><button class="tb on"><svg><use href="#planes"/></svg></button><button class="tb"><svg><use href="#planes"/></svg></button><button class="tb"><svg><use href="#planer"/></svg></button><button class="tb"><svg><use href="#mesh"/></svg></button><button class="tb"><svg><use href="#tools"/></svg></button><i class="sep"></i>
    <button class="tb"><svg><use href="#nodes"/></svg></button><button class="tb"><svg><use href="#rotate"/></svg></button><button class="tb"><svg><use href="#mirror"/></svg></button><button class="tb"><svg><use href="#xnode"/></svg></button><button class="tb"><svg><use href="#infow"/></svg></button><button class="tb"><svg><use href="#clock"/></svg></button><button class="tb"><svg><use href="#gears"/></svg></button>
  </div>
  <div class="toolbar"><i class="grip"></i>
    <button class="tb"><svg><use href="#xydown"/></svg></button><button class="tb"><svg><use href="#xyup"/></svg></button><button class="tb"><svg><use href="#pdfd"/></svg></button><button class="tb"><svg><use href="#pdfu"/></svg></button>
  </div>
</div>
<div class="toolrow">
  <div class="toolbar"><i class="grip"></i>
    <button class="tb dd"><svg><use href="#node"/></svg></button><button class="tb"><svg><use href="#line"/></svg></button><button class="tb dd"><svg><use href="#member"/></svg></button><button class="tb dd"><svg><use href="#arc"/></svg></button><i class="sep"></i>
    <button class="tb"><svg><use href="#support"/></svg></button><button class="tb"><svg><use href="#lsupport"/></svg></button><button class="tb"><svg><use href="#ssupport"/></svg></button><i class="sep"></i>
    <button class="tb dd"><svg><use href="#dim"/></svg></button><button class="tb"><svg><use href="#xx"/></svg></button><button class="tb"><svg><use href="#guides"/></svg></button><i class="sep"></i>
    <button class="tb dd"><svg><use href="#shape"/></svg></button><button class="tb dd"><svg><use href="#hole"/></svg></button><button class="tb dd"><svg><use href="#fold"/></svg></button><button class="tb"><svg><use href="#solid"/></svg></button><button class="tb dd"><svg><use href="#solids"/></svg></button><i class="sep"></i>
    <button class="tb dd"><svg><use href="#combo"/></svg></button><button class="tb"><svg><use href="#nload"/></svg></button><button class="tb"><svg><use href="#lload"/></svg></button><button class="tb"><svg><use href="#lload"/></svg></button><button class="tb"><svg><use href="#vload"/></svg></button><button class="tb dd"><svg><use href="#gload"/></svg></button>
  </div>
  <div class="toolbar"><i class="grip"></i>
    <button class="tb"><svg><use href="#pan"/></svg></button><button class="tb"><svg><use href="#zoomw"/></svg></button><button class="tb"><svg><use href="#zoomx"/></svg></button><button class="tb"><svg><use href="#cube"/></svg></button><button class="tb"><svg><use href="#cubes"/></svg></button><i class="sep"></i>
    <button class="tb"><svg><use href="#viewx"/></svg></button><button class="tb"><svg><use href="#viewy"/></svg></button><button class="tb"><svg><use href="#viewz"/></svg></button><button class="tb dd"><svg><use href="#viewm"/></svg></button><button class="tb dd"><svg><use href="#micro"/></svg></button><i class="sep"></i>
    <button class="tb dd"><svg><use href="#clip"/></svg></button>
  </div>
  <div class="toolbar"><i class="grip"></i>
    <button class="tb"><svg><use href="#frame"/></svg></button><button class="tb"><svg><use href="#cyl"/></svg></button><i class="sep"></i>
    <button class="tb"><svg><use href="#defm"/></svg></button><button class="tb on"><svg><use href="#rain"/></svg></button><button class="tb"><svg><use href="#raincube"/></svg></button><button class="tb"><svg><use href="#reac"/></svg></button><button class="tb"><svg><use href="#pencil"/></svg></button><button class="tb dd"><svg><use href="#tiles"/></svg></button><button class="tb"><svg><use href="#isec"/></svg></button><button class="tb"><svg><use href="#tab3"/></svg></button><i class="sep"></i>
    <button class="tb on"><svg><use href="#panel"/></svg></button><button class="tb dd"><svg><use href="#wand"/></svg></button><button class="tb dd"><svg><use href="#spectrum"/></svg></button>
  </div>
  <div class="toolbar"><i class="grip"></i>
    <button class="tb dd"><svg><use href="#dev"/></svg></button><button class="tb dd"><svg><use href="#dev"/></svg></button>
  </div>
</div>
</div>

<div class="main">
<aside class="navigator">
  <div class="dockhead"><span>Navegador de proyectos - Datos</span><svg width="10" height="10"><use href="#pin"/></svg><svg width="10" height="10"><use href="#x"/></svg></div>
  <div class="treebox">
    <div class="treeview">
    <ul class="tree l0"><li><div class="row"><i class="ex"><svg><use href="#minus"/></svg></i><svg class="ti"><use href="#net"/></svg><b>Net</b></div>
    <ul class="l1">
      <li><div class="row"><i class="ex"><svg><use href="#minus"/></svg></i><svg class="ti"><use href="#foldo"/></svg>Datos del modelo</div>
      <ul class="l2">
        <li class="row"><i class="ex"><svg><use href="#plus"/></svg></i><svg class="ti"><use href="#f-node"/></svg>Nudos</li>
        <li class="row"><i class="ex"><svg><use href="#plus"/></svg></i><svg class="ti"><use href="#f-line"/></svg>Líneas</li>
        <li class="row"><i class="ex"><svg><use href="#plus"/></svg></i><svg class="ti"><use href="#f-mat"/></svg>Materiales</li>
        <li class="row"><i class="ex"><svg><use href="#plus"/></svg></i><svg class="ti"><use href="#f-surf"/></svg>Superficies</li>
        <li class="row"><i class="ex"></i><svg class="ti"><use href="#f-solid"/></svg>Sólidos</li>
        <li class="row"><i class="ex"></i><svg class="ti"><use href="#f-hole"/></svg>Huecos</li>
        <li class="row"><i class="ex"></i><svg class="ti"><use href="#f-sup"/></svg>Apoyos en nudos</li>
        <li class="row"><i class="ex"><svg><use href="#plus"/></svg></i><svg class="ti"><use href="#f-lsup"/></svg>Apoyos en línea</li>
        <li class="row"><i class="ex"></i><svg class="ti"><use href="#f-ssup"/></svg>Apoyos en superficie</li>
        <li class="row"><i class="ex"></i><svg class="ti"><use href="#f-rel"/></svg>Articulaciones lineales</li>
        <li class="row"><i class="ex"></i><svg class="ti"><use href="#f-surf"/></svg>Espesores variables</li>
        <li class="row"><i class="ex"></i><svg class="ti"><use href="#f-orto"/></svg>Superficies ortótropas y mem</li>
        <li class="row"><i class="ex"><svg><use href="#plus"/></svg></i><svg class="ti"><use href="#f-sec"/></svg>Secciones</li>
        <li class="row"><i class="ex"></i><svg class="ti"><use href="#f-art"/></svg>Articulaciones en barras</li>
        <li class="row"><i class="ex"></i><svg class="ti"><use href="#f-bar"/></svg>Excentricidades de barra</li>
        <li class="row"><i class="ex"></i><svg class="ti"><use href="#f-line"/></svg>Divisiones de barra</li>
        <li class="row"><i class="ex"><svg><use href="#plus"/></svg></i><svg class="ti"><use href="#f-bar"/></svg>Barras</li>
        <li class="row"><i class="ex"></i><svg class="ti"><use href="#f-rel"/></svg>Nervios</li>
        <li class="row"><i class="ex"></i><svg class="ti"><use href="#f-lsup"/></svg>Apoyos elásticos en barra</li>
        <li class="row"><i class="ex"></i><svg class="ti"><use href="#f-nl"/></svg>No linealidades de barra</li>
        <li class="row"><i class="ex"></i><svg class="ti"><use href="#f-set"/></svg>Conjuntos de barras</li>
        <li class="row"><i class="ex"></i><svg class="ti"><use href="#f-surf"/></svg>Intersecciones de superficie</li>
        <li class="row"><i class="ex"></i><svg class="ti"><use href="#f-hole"/></svg>Refinamientos de ma</li>
        <li class="row"><i class="ex"></i><svg class="ti"><use href="#fold0"/></svg>Liberaciones de nudo</li>
        <li class="row"><i class="ex"></i><svg class="ti"><use href="#fold0"/></svg>Tipos de liberaciones</li>
        <li class="row"><i class="ex"></i><svg class="ti"><use href="#f-rel"/></svg>Liberaciones de líneas</li>
        <li class="row"><i class="ex"></i><svg class="ti"><use href="#f-t"/></svg>Tipos de liberaciones</li>
        <li class="row"><i class="ex"></i><svg class="ti"><use href="#f-t"/></svg>Liberaciones de super</li>
        <li class="row"><i class="ex"></i><svg class="ti"><use href="#fold0"/></svg>Unión de dos barras</li>
        <li class="row"><i class="ex"></i><svg class="ti"><use href="#fold0"/></svg>Uniones</li>
        <li class="row"><i class="ex"></i><svg class="ti"><use href="#f-co"/></svg>Coacciones en nudo</li>
      </ul></li>
      <li><div class="row"><i class="ex"><svg><use href="#minus"/></svg></i><svg class="ti"><use href="#foldo"/></svg>Casos de carga y combin</div>
      <ul class="l2">
        <li class="row"><i class="ex"></i><svg class="ti"><path d="M12 5v7M10 10l2 3 2-3" stroke="#1f4aa0" fill="none" stroke-width="2"/><path d="M1 14h14" stroke="#222"/></svg>Casos de carga</li>
        <li class="row"><i class="ex"></i><svg class="ti"><use href="#combog"/></svg>Combinaciones de ca</li>
        <li class="row"><i class="ex"></i><svg class="ti"><use href="#combo"/></svg>Combinaciones de re</li>
      </ul></li>
      <li class="row"><i class="ex"></i><svg class="ti"><use href="#fold0"/></svg>Cargas</li>
      <li class="row"><i class="ex"><svg><use href="#plus"/></svg></i><svg class="ti"><use href="#fold0"/></svg>Resultados</li>
      <li class="row"><i class="ex"></i><svg class="ti"><use href="#fold0"/></svg>Secciones</li>
      <li class="row"><i class="ex"></i><svg class="ti"><use href="#fold0"/></svg>Regiones medias</li>
      <li class="row"><i class="ex"></i><svg class="ti"><use href="#fold0"/></svg>Informes</li>
      <li class="row"><i class="ex"><svg><use href="#plus"/></svg></i><svg class="ti"><use href="#fold0"/></svg>Objetos auxiliares</li>
      <li><div class="row"><i class="ex"><svg><use href="#minus"/></svg></i><svg class="ti"><use href="#foldo"/></svg>Módulos adicionales</div>
      <ul class="l2 open">
        <li class="row"><i class="ex"></i><svg class="ti"><path d="M1 1h14v14H1z" fill="#fff" stroke="#8c8cf5" stroke-width="2"/><path d="M3 11l3-5h7l-2 5z" fill="url(#rainbow)" stroke="#345"/></svg>RF-STEEL Surfaces - A</li>
        <li class="row"><i class="ex"></i><svg class="ti"><use href="#mod"/></svg>RF-STEEL Members -</li>
        <li class="row"><i class="ex"></i><svg class="ti"><use href="#mod"/><text x="3" y="14">EC</text></svg>RF-STEEL EC3 - Cálcu</li>
        <li class="row"><i class="ex"></i><svg class="ti"><use href="#mod"/><text x="0" y="14">AISC</text></svg>RF-STEEL AISC - Dise</li>
        <li class="row"><i class="ex"></i><svg class="ti"><use href="#mod"/><text x="3" y="14">IS</text></svg>RF-STEEL IS - Cálculo</li>
        <li class="row"><i class="ex"></i><svg class="ti"><use href="#mod"/><text x="2" y="14">SIA</text></svg>RF-STEEL SIA - Cálcul</li>
        <li class="row"><i class="ex"></i><svg class="ti"><use href="#mod"/><text x="4" y="14">BS</text></svg>RF-STEEL BS - Cálculo</li>
        <li class="row"><i class="ex"></i><svg class="ti"><use href="#mod"/><text x="4" y="14">GB</text></svg>RF-STEEL GB - Cálcul</li>
        <li class="row"><i class="ex"></i><svg class="ti"><use href="#mod"/><text x="1" y="14">CSA</text></svg>RF-STEEL CSA - Cálcu</li>
        <li class="row"><i class="ex"></i><svg class="ti"><use href="#mod"/><text x="3" y="14">AS</text></svg>RF-STEEL AS - Cálculo de barras de acer</li>
      </ul></li>
    </ul></li></ul>
    <div class="vscroll"><svg class="up"><use href="#chev"/></svg><svg><use href="#chev"/></svg></div>
    </div>
    <div class="hscroll"><svg class="lf"><use href="#chev"/></svg><i class="thumb"></i><svg class="rt"><use href="#chev"/></svg></div>
  </div>
  <div class="docktabs">
    <button class="sel"><svg class="ic"><use href="#t-data"/></svg>Datos</button><button><svg class="ic"><use href="#t-show"/></svg>Mostrar</button><button><svg class="ic"><use href="#t-view"/></svg>Vistas</button><button><svg class="ic"><use href="#rain"/></svg>Resultados</button>
  </div>
</aside>

<main class="canvas">
  <p>Esfuerzos internos básicos n-x [kN/m]<br>RF-FORM-FINDING</p>
  <svg class="plot" width="720" height="780" viewBox="0 0 720 780">
    <defs>
      <clipPath id="outline"><path d="M54 268H1508V2272H54L320 2243 590 2157 860 1988 1057 1693 1138 1286 1070 860 870 540 600 365 310 290z"/></clipPath>
    </defs>
    <g class="field" transform="scale(.45918 .33333)">
      <g clip-path="url(#outline)" class="bands">
        <path fill="#00f5f5" d="M54 268H1508V2272H54L300 2240 1000 1286z"/>
        <path fill="#00e887" d="M1600 268H1372L1350 285 1325 322 1310 335 1290 345 1252 352 1243 385 1210 415 1178 437 1168 460 1160 490 1148 510 1122 510 1118 522 1075 542 1005 544 990 550 945 544 930 562 940 600 990 640 940 700 900 1500 800 1900 870 1968 935 1930 960 1935 1012 1905 1008 1925 1043 1903 1030 1925 1035 1935 1030 1960 1045 1985 1075 2002 1130 2002 1134 2008 1155 2008 1170 2026 1205 2042 1205 2075 1240 2085 1288 2095 1310 2112 1345 2128 1350 2155 1385 2135 1405 2110 1440 2062 1508 1970 1600 1900z"/>
        <path fill="#00e887" d="M0 240H460V278L445 286 400 286 480 318 540 335 600 365 640 395 300 350z"/>
        <path fill="#00e887" d="M1276 2272L1310 2238 1340 2205 1355 2175 1370 2165 1383 2172 1390 2200 1420 2235 1470 2272z"/>
        <path fill="#00e887" d="M54 2272L125 2266 300 2260 340 2265 425 2263 434 2272z"/>
        <path fill="#00ff00" d="M1600 545H1508L1475 541 1450 547 1410 548 1365 568 1310 595 1250 622 1190 643 1145 658 1130 658 1100 667 1040 665 1003 656 1015 720 1050 840 900 1500 860 1912H910L990 1843 1010 1854 1060 1843 1145 1832 1180 1842 1220 1863 1280 1875 1360 1883 1400 1896 1440 1885 1470 1860 1508 1830H1600z"/>
        <path fill="#ffff00" d="M1600 710H1508L1470 700 1440 695 1405 695 1340 710 1270 728 1200 750 1130 758 1080 750 1040 739 1048 790 1058 830 900 1500 900 1840H960L1028 1773 1045 1783 1060 1778 1120 1760 1180 1750 1230 1748 1300 1755 1370 1768 1420 1774 1460 1768 1508 1740H1600z"/>
        <path fill="#d0d000" d="M1600 832H1508L1470 820 1430 812 1370 818 1300 824 1230 833 1185 837 1130 833 1078 821 1075 838 1064 812 1070 860 900 1500 960 1765H1010L1065 1712 1075 1715 1130 1690 1190 1677 1240 1668 1310 1669 1400 1672 1440 1676 1470 1672 1508 1657H1600z"/>
        <path fill="#ffa800" d="M1600 935H1490L1430 920 1370 915 1300 915 1210 916 1150 912 1115 903 1108 912 1070 860 900 1500 1060 1700 1080 1680 1110 1650 1160 1617 1220 1598 1280 1590 1370 1588 1410 1580 1470 1593 1508 1583H1600z"/>
        <path fill="#d0d000" d="M1040 1690L1075 1612 1080 1670 1060 1700z"/>
        <path fill="#ff0000" d="M1600 1025H1508L1490 1034 1440 1032 1360 1018 1280 1005 1185 997 1165 997 1155 1007 1145 997 1130 1000 1122 938 1105 930 1095 895 1060 850 1000 1286 1070 1600 1085 1560 1103 1490 1100 1585 1115 1572 1130 1570 1160 1540 1200 1517 1240 1505 1350 1497 1440 1490 1490 1513H1600z"/>
        <path fill="#b90000" d="M1600 1130H1508L1485 1155 1465 1160 1437 1180 1420 1150 1410 1133 1395 1130 1380 1142 1362 1130 1355 1113 1340 1110 1330 1120 1312 1118 1308 1098 1295 1093 1275 1107 1262 1100 1258 1090 1248 1085 1240 1090 1232 1105 1218 1095 1205 1095 1195 1122 1178 1130 1170 1200 1164 1300 1150 1380 1147 1470 1160 1410 1170 1405 1180 1435 1195 1405 1215 1418 1240 1407 1300 1395 1325 1393 1360 1375 1415 1367 1425 1355 1440 1355 1470 1395 1508 1428H1600z"/>
        <path fill="#b90000" d="M1060 850L1096 900 1106 955 1116 960 1128 1090 1142 1286 1103 1480 1085 1560 1125 1286z"/>
        <path fill="#0000a8" d="M455 303L575 318 640 360 730 405 800 455 860 525 935 580 900 590 700 450 590 355z"/>
        <path fill="#0000ff" d="M600 365L650 372 690 390 640 395zM640 395L700 400 690 420z"/>
        <path fill="#b90000" d="M690 395L800 470 880 545 840 520 760 455z"/>
        <path fill="#ffa800" d="M715 402L800 462 890 550 850 520z"/>
        <path fill="#00ff00" d="M760 410L800 430 930 575 890 545z"/>
        <path fill="#ffff00" d="M728 405L760 412 870 515 930 576 860 520z"/>
        <path fill="#0000a8" d="M865 540L930 590 975 650 1000 690 1062 850 1010 780 960 700z"/>
        <path fill="#00a0ff" d="M940 605L985 625 1000 655 965 640z"/>
        <path fill="#0000ff" d="M975 665L990 700 1000 740 980 710z"/>
        <path fill="#00f5f5" d="M980 700L1000 735 1012 765 990 725z"/>
        <path fill="#ffff00" d="M1005 755L1030 785 1060 845 1020 800z"/>
        <path fill="#00a0ff" d="M590 2157L700 2125 790 2098 860 2068 905 2040 920 2010 940 1985 936 1960 890 2000 700 2100z"/>
        <path fill="#0000ff" d="M590 2160L690 2133 800 2085 890 2010 830 2060 700 2100z"/>
        <path fill="#0000a8" d="M600 2150L700 2108 805 2078 860 2030 960 1938 860 1980 700 2070z"/>
        <path fill="#00ff00" d="M330 2250L370 2220 540 2175 500 2200 420 2225 380 2238z"/>
        <path fill="#00ff00" d="M195 273L330 281 330 284 210 280z"/>
      </g>
      <path class="mesh" d="M340 268Q700 350 1035 395L1508 468M495 268Q800 420 1240 570L1508 668M640 268Q950 560 1200 700L1508 870M785 268Q1010 600 1070 690 1150 830 1175 960L1250 1015 1508 1068M1138 1286L1508 1270M1508 1470L1240 1555 1100 1700 870 1970M1508 1670L1180 1810 860 2040 590 2157M1508 1870L1180 1960 780 2100 300 2258M1508 2070L1100 2130 600 2200 54 2272M1508 268L1395 440 1330 610 1290 820 1260 1000 1240 1280 1200 1480 1130 1650 1050 1790 640 2272M1372 268L1250 560 1200 720 1190 960 1215 1280 1180 1500 1100 1690 960 1900 500 2230M1218 268L1165 560 1185 840 1220 1000 1240 1200M1218 268L1395 440 1508 560M1072 268L1060 400 1095 700 1150 1000 1170 1280 1110 1600M930 268L990 550 1060 740 1110 900 1145 1286 1105 1560M1508 668L1430 860 1380 1060 1385 1280 1350 1480 1290 1680 1180 1900 930 2272M1395 440L1440 680 1365 830 1330 1040 1335 1280 1290 1500 1240 1660 1160 1860 790 2272M1508 870L1450 1050 1445 1280 1430 1480 1365 1680 1270 1920 1080 2272M1508 1068L1480 1180 1445 1280 1390 1480 1330 1600 1200 1830M1508 1270L1450 1480 1430 1680 1380 2040 1220 2272M1508 1470L1430 1700 1395 1990 1508 2272M1508 1670L1440 1900 1360 2060 1508 2272M1072 268L1250 570 1290 820 1330 1040M1250 570L1395 440M1200 720L1330 610 1440 860 1508 1068M785 268L1165 560M350 268L1072 560M54 2272L590 2180 1360 2170M350 2265L870 2150 1200 2190M1098 900L1160 1280M1085 900L1138 1286M1075 1700L1152 1286"/>
      <path class="contour" d="M180 275L330 284 470 308 590 330 730 402M330 285L470 320 600 362M600 365L700 410 870 540M640 375L760 430 860 530M870 540L930 590 1000 655 1050 840M880 545L960 650 1010 755 1070 860M965 620L1000 680 1045 820M1068 855L1102 920M590 2157L860 1985 960 1935M600 2150L700 2115 800 2088 890 2010 965 1945M300 2245L540 2172 590 2157M330 2240L440 2225 540 2185M125 2266L300 2260 340 2265"/>
      <path class="rest" d="M126 368H1436V2171H126z"/>
      <path class="edge" d="M54 268H1508V2272H54"/>
      <path class="axis-l" d="M54 268V2272"/>
      <path class="dims" d="M54 66V268M1508 66V268M54 80H746M818 80H1508"/>
      <path fill="#000080" d="M54 80l22-7v14zM1508 80l-22-7v14z"/>
      <path d="M54 268H125" stroke="#e00000" stroke-width="2"/><path fill="#e00000" d="M142 268l-22-8v16z"/>
      <path d="M54 268V370" stroke="#00e000" stroke-width="2"/><path fill="#00b000" d="M54 390l-7-27h14z"/>
      <path fill="#0000d8" d="M48 258h12v20H48z"/><path fill="#900000" d="M1504 262h9v12h-9zM1504 2266h9v12h-9zM50 2266h8v12h-8z"/>
      <path class="sup" d="M206 227h59v81h-59zM569 227h59v81h-59zM933 227h60v81h-60zM1297 227h60v81h-60zM206 2230h59v82h-59zM569 2230h59v82h-59zM933 2230h60v82h-60zM1297 2230h60v82h-60zM1479 478h59v82h-59zM1479 978h59v82h-59zM1479 1480h59v82h-59zM1479 1980h59v82h-59z"/>
    </g>
    <text x="359" y="31" class="dimtext">1.000</text>
    <text x="72" y="93" fill="#e03030">X</text><text x="22" y="143" fill="#30e030">Y</text>
  </svg>
  <p class="foot"><span>Máx.n-x: 1.08, Mín. n-x: 0.95 kN/m</span><span>[m]</span></p>
</main>

<aside class="panel">
  <div class="dockhead"><span>Panel</span><svg width="10" height="10"><use href="#pin"/></svg><svg width="10" height="10"><use href="#x"/></svg></div>
  <div class="panelbody">
    <p>Esfuerzos internos básicos<br>n<sub>x</sub> [kN/m]</p>
    <div class="legend">
      <div class="scale"><i></i><i></i><i></i><i></i><i></i><i></i><i></i><i></i><i></i><i></i><i></i></div>
      <ol><li>1.08</li><li>1.07</li><li>1.06</li><li>1.04</li><li>1.03</li><li>1.02</li><li>1.01</li><li>1.00</li><li>0.99</li><li>0.98</li><li>0.96</li><li>0.95</li></ol>
    </div>
    <dl class="minmax"><dt>Máx</dt><dd>:</dd><dd>1.08</dd><dt>Mín</dt><dd>:</dd><dd>0.95</dd></dl>
    <button class="sq zoomer"><svg class="ic"><use href="#lens"/></svg></button>
  </div>
  <div class="docktabs icons"><button class="sel"><svg class="ic"><use href="#t-leg"/></svg></button><button><svg class="ic"><use href="#t-bal"/></svg></button><button><svg class="ic"><use href="#t-mic"/></svg></button></div>
</aside>
</div>

<footer class="status">
  <div class="modes"><button class="down">FORZC</button><button>REJILLA</button><button class="down">CARTES</button><button>REFENT</button><button class="down">GLN</button><button class="down">DXF</button></div>
  <i class="c1"></i><i class="c2"></i><i class="c3"></i><i class="c3"></i><i class="c3"></i>
</footer>

<section class="dialog edit-bar">
  <header class="dtitle inactive"><span>Editar barra</span><button><svg width="12" height="12"><use href="#x"/></svg></button></header>
  <div class="tabs"><button class="sel">General</button><button>Opciones</button><button>Longitudes eficaces</button><button>Modificar rigidez</button></div>
  <div class="page">
    <div class="gridtop">
      <fieldset class="group g-num"><h3>Barra <u>n</u>úm.</h3><div class="gb"><input class="ro num" value="1" readonly aria-label="Barra núm."></div></fieldset>
      <fieldset class="group g-lin"><h3>Línea núm.:</h3><div class="gb"><div class="combo w63"><select aria-label="Línea núm."><option>4</option></select></div><button class="sq"><svg class="ic"><use href="#pick"/></svg></button></div></fieldset>
      <fieldset class="group g-tipo"><h3>Tipo de barra</h3><div class="gb"><div class="combo"><i class="sw peach"></i><select aria-label="Tipo de barra"><option>Cable</option></select></div><button class="sq"><svg class="ic"><use href="#edit"/></svg></button></div></fieldset>
      <fieldset class="group g-nudo"><h3>Nudo núm.</h3><div class="gb"><input class="ro" value="4,1" readonly aria-label="Nudo núm."></div></fieldset>
      <fieldset class="group g-giro"><h3>Giro de barra por</h3>
        <div class="giro">
          <label><input type="radio" name="g" checked><span><u>Á</u>ngulo</span></label><label class="beta" for="beta">β:</label>
          <div class="spin"><input id="beta" value="0.00"><i class="ud"></i><button></button></div><span>[°]</span>
          <label><input type="radio" name="g"><span>N<u>u</u>do auxiliar:</span></label><label class="dis" for="nn">Núm.:</label>
          <div class="combo w63 offc"><select id="nn" disabled><option>Interior</option></select></div><span class="pair"><button class="sq off"><svg class="ic"><use href="#pick"/></svg></button><button class="sq off"><svg class="ic"><use href="#newbox"/></svg></button></span>
        </div>
        <div class="plano"><span class="dis">En el plano:</span><label class="dis"><input type="radio" name="p" checked disabled><span>x-<u>y</u></span></label><label class="dis xz"><input type="radio" name="p" disabled><span>x-<u>z</u></span></label></div>
        <button class="sq ginfo"><svg class="ic"><use href="#info"/></svg></button>
      </fieldset>
      <div class="preview g-prev"><span>Círculo 3</span>
        <svg width="282" height="200" viewBox="0 0 282 200">
          <defs><pattern id="hatch" width="5" height="5" patternUnits="userSpaceOnUse"><path d="M0 0h5v5H0z" fill="#6060ff"/><path d="M-1-1l7 7M-1 4l2 2M4-1l2 2" stroke="#d0d0ff" stroke-width=".9"/></pattern></defs>
          <circle cx="136" cy="91" r="61" fill="url(#hatch)" stroke="#000"/>
          <path d="M136 91h76M136 91v80" stroke="#f0f" stroke-dasharray="9 3 2 3" fill="none"/>
          <path d="M134 89h4v4h-4zM212 88l5 3-5 3zM133 168h6l-3 6z" fill="#f0f"/>
          <text x="217" y="101">y</text><text x="138" y="180">z</text>
        </svg></div>
    </div>
    <fieldset class="group g-sec"><h3>Sección</h3>
      <div class="secrow"><label for="ini"><span><u>I</u>nicio de barra:</span></label><div class="combo"><i class="sw blue"></i><i class="dot"></i><span class="c-n">1</span><span class="c-s">Círculo 3</span><select id="ini"><option>Acero S 235</option></select><i class="sw violet"></i></div><button class="sq"><svg class="ic"><use href="#book"/></svg></button><button class="sq"><svg class="ic"><use href="#newbox"/></svg></button><button class="sq"><svg class="ic"><use href="#edit"/></svg></button><button class="sq"><svg class="ic"><use href="#info"/></svg></button></div>
      <div class="secrow"><label class="dis" for="fin"><span><u>F</u>in de barra:</span></label><div class="combo offc empty"><select id="fin" disabled><option></option></select></div><button class="sq off"><svg class="ic"><use href="#book"/></svg></button><button class="sq off"><svg class="ic"><use href="#newbox"/></svg></button><button class="sq off"><svg class="ic"><use href="#edit"/></svg></button><button class="sq off"><svg class="ic"><use href="#info"/></svg></button></div>
    </fieldset>
    <fieldset class="group g-next"><h3></h3></fieldset>
  </div>
</section>

<section class="dialog edit-cable">
  <header class="dtitle"><span>Editar parámetros para la barra de tipo 'Cable'</span><button><svg width="12" height="12"><use href="#x"/></svg></button></header>
  <div class="cablebody">
    <div class="cableleft">
      <fieldset class="group act"><label><input type="checkbox" checked><span class="focus">Activar</span></label></fieldset>
      <fieldset class="group params"><h3>Parámetros del cable para la búsqueda de forma</h3>
        <div class="plist">
          <p>Especificar por:</p>
          <label class="main-opt"><input type="radio" name="sp" checked><span><u>G</u>eometría</span></label>
          <div class="prow"><label><input type="radio" name="ge"><span><u>L</u>ongitud del cable de destino</span></label><b>L<sub>c</sub> :</b><div class="spin dim"><input value="2129.4" aria-label="Lc"><i class="ud"></i><button></button></div><span>[mm]</span></div>
          <div class="prow"><label><input type="radio" name="ge"><span>Longitud <u>r</u>elativa del cable de destino</span></label><b>L<sub>rel</sub> :</b><div class="spin dim"><input value="212.94" aria-label="Lrel"><i class="ud"></i><button></button></div><span>[%]</span></div>
          <div class="prow gap"><label><input type="radio" name="ge" checked><span>Flecha <u>a</u>bsoluta del cable de destino</span></label><b>s :</b><div class="spin"><input value="750.0" aria-label="s"><i class="ud"></i><button></button></div><span>[mm]</span></div>
          <div class="prow"><label><input type="radio" name="ge"><span>Flecha r<u>e</u>lativa del cable de destino</span></label><b>s<sub>rel</sub> :</b><div class="spin dim"><input value="75.00" aria-label="srel"><i class="ud"></i><button></button></div><span>[%]</span></div>
          <label class="main-opt fz"><input type="radio" name="sp"><span><u>F</u>uerza</span></label>
          <div class="prow"><label class="dis"><input type="radio" name="fu" disabled><span>Esfuer<u>z</u>o medio en el cable</span></label><b>T :</b><div class="spin dim"><input value="" aria-label="T"><i class="ud"></i><button></button></div><span>[kN]</span></div>
          <div class="prow sm"><label class="dis"><input type="radio" name="fu" disabled><span><u>D</u>ensidad de la fuerza</span></label><b>T<sub>d</sub> :</b><div class="spin dim"><input value="" aria-label="Td"><i class="ud"></i><button></button></div><span>[kN/m]</span></div>
        </div>
      </fieldset>
    </div>
    <div class="preview cablepic">
      <svg width="290" height="438" viewBox="0 0 290 438">
        <g fill="none">
          <path d="M63 158H229" stroke="#5cc8ee" stroke-width="1.500" stroke-dasharray="2 3"/>
          <path d="M63 158Q145 189 229 158" stroke="#111" stroke-width="2"/>
          <path d="M192 135V200M171 176.500H200" stroke="#222"/>
          <path d="M57 230Q146 259 234 230M58 214L56 231M233 212L235 231" stroke="#222"/>
          <path d="M57 155L34 145M236 155L259 145" stroke="#0aa3e8" stroke-width="2"/>
          <path d="M63 289H82" stroke="#e8202a" stroke-width="1.500"/><path d="M63 289V310" stroke="#3a2f8c" stroke-width="1.500"/>
        </g>
        <path d="M26 142l10-1-4 10zM266 142l-10-1 4 10z" fill="#0aa3e8"/>
        <path d="M192 158l-3-7h6zM192 177l-3 6h6zM56 229l7 0-2 5zM235 229l-7 0 2 5z" fill="#222"/>
        <path d="M61 155h4v6h-4zM227 155h4v6h-4z" fill="#e8202a"/>
        <path d="M88 289l-9-5v10z" fill="#e8202a"/><path d="M63 322l-4-12h8z" fill="#3a2f8c"/><circle cx="63" cy="289" r="2.500" fill="#a04080"/>
        <text x="23" y="134" fill="#45b9ee">T</text><text x="261" y="134" fill="#45b9ee">T</text>
        <text x="57" y="151" fill="#e8404a">i</text><text x="233" y="148" fill="#e8404a">j</text>
        <text x="198" y="191" fill="#333">s</text><text x="141" y="237" fill="#333">L<tspan dy="3" font-size="10">c</tspan></text>
        <text x="90" y="294" fill="#e8404a">X</text><text x="58" y="339" fill="#5a4f9c">Z</text>
      </svg>
    </div>
  </div>
  <footer class="dfoot"><button class="sq"><svg class="ic"><use href="#help"/></svg></button><button class="sq dec"><i class="ruler"></i><span>0.00</span></button><span class="fill"></span><button class="btn primary">Aceptar</button><button class="btn">Cancelar</button></footer>
</section>
</body>
</html>
```
FILE: styles.css
```css
*, *::before, *::after { box-sizing: border-box; }
html, body { height: 100%; }
body { margin: 0; display: flex; flex-direction: column; background: #cfd4de; font: 11px/14px "Open Sans", "Noto Sans", sans-serif; color: #000; overflow: hidden; }
button { font: inherit; color: inherit; padding: 0; border: 0; background: none; display: flex; align-items: center; justify-content: center; }
input, select { font: inherit; color: inherit; margin: 0; }
a { color: inherit; text-decoration: none; }
ul, ol, dl, dd, p, h3 { margin: 0; padding: 0; list-style: none; font-weight: normal; font-size: inherit; }
fieldset { margin: 0; padding: 0; min-width: 0; border: 0; }
svg { flex: none; overflow: visible; }
.sprite { position: absolute; width: 0; height: 0; overflow: hidden; }
.ic { width: 16px; height: 16px; }

.titlebar { flex: none; height: 23px; background: #fff; display: flex; align-items: center; gap: 5px; padding: 0 0 2px 2px; color: #8c8c8c; font-size: 12px; }
.winbtns { margin-left: auto; display: flex; }
.winbtns button { width: 46px; height: 21px; color: #777; }

.menubar { flex: none; height: 24px; display: flex; align-items: center; gap: 15px; padding: 0 7px; color: #454b5c; }
.menubar .mlogo { margin: 0 -4px 0 -14px; }
.mdi { margin-left: auto; display: flex; gap: 8px; }
.grip { flex: none; width: 2px; height: 17px; margin: 0 4px; background: repeating-linear-gradient(#a4abb9 0 2px, transparent 2px 4px); }
.menubar .grip { margin: 0 0 0 -3px; }

.toolrows { flex: none; display: flex; flex-direction: column; gap: 1px; padding-bottom: 1px; }
.toolrow { display: flex; gap: 2px; }
.toolbar { display: flex; align-items: center; height: 25px; background: linear-gradient(#eceff8, #d3d8e4); border-radius: 0 3px 3px 0; border-bottom: 1px solid #b3bac8; padding-right: 1px; }
.tb { width: 22px; height: 23px; border-radius: 2px; }
.tb svg { width: 18px; height: 18px; }
.tb.on { background: linear-gradient(#fdc98a, #fbae52 45%, #fee38e); border: 1px solid #b39a63; }
.tb.dd { width: 35px; justify-content: flex-start; padding-left: 2px; gap: 5px; }
.tb.dd::after { content: ""; border: 3px solid transparent; border-top-color: #666; border-bottom: 0; }
.sep { width: 1px; height: 16px; background: #b0b7c5; margin: 0 3px 0 4px; }
.loadcase { appearance: none; width: 215px; height: 21px; margin: 0 3px 0 2px; padding: 0 3px; border: 1px solid #fff; border-radius: 0; background: linear-gradient(#777, #777) 205px 8px / 5px 1px no-repeat, linear-gradient(#777, #777) 206px 9px / 3px 1px no-repeat, linear-gradient(90deg, #fff 200px, #dfe4ef 200px); font-size: 11px; line-height: 16px; }

.main { flex: 1; min-height: 0; display: flex; }
.navigator { flex: none; width: 315px; display: flex; flex-direction: column; }
.dockhead { flex: none; height: 20px; background: #b8bfca; border: 1px solid #aab1be; border-width: 0 0 1px 1px; padding: 0 6px 0 3px; display: flex; align-items: center; gap: 8px; color: #444a55; }
.dockhead span { flex: 1; font-size: 11px; }
.treebox { flex: 1; min-height: 0; margin: 2px 0 0 2px; border: 2px solid #e8ebf2; border-left-color: #8f96a3; border-bottom: 1px solid #777; display: flex; flex-direction: column; }
.treeview { flex: 1; min-height: 0; display: flex; background: #fcfcf3; overflow: hidden; }
.tree { flex: 1; min-width: 0; overflow: hidden; white-space: nowrap; }
.row { height: 18px; display: flex; align-items: center; }
.row b { font-size: 12px; }
.tree ul { padding-left: 19px; background: repeating-linear-gradient(#808080 0 1px, transparent 1px 2px) 30px 0 / 1px 100% no-repeat; }
.tree ul.l2 { background-size: 1px calc(100% - 9px); }
.tree ul.open { background-size: 1px 100%; }
.tree.l0 { padding-left: 2px; }
.ex { flex: none; width: 20px; height: 18px; padding: 5px 0 0 5px; margin-right: 1px; background: repeating-linear-gradient(90deg, #808080 0 1px, transparent 1px 2px) 10px 9px / 10px 1px no-repeat; }
.ex svg { display: block; width: 9px; height: 9px; margin: 0; }
.ti { width: 16px; height: 16px; margin-right: 4px; }
.ti text { font: bold 7px "Liberation Sans", sans-serif; fill: #111; }
.vscroll { flex: none; width: 16px; background: #f0f0f0; display: flex; flex-direction: column; justify-content: space-between; align-items: center; padding: 6px 0; }
.vscroll svg, .hscroll svg { width: 9px; height: 6px; color: #444; }
.up { transform: rotate(180deg); }
.lf { transform: rotate(90deg); }
.rt { transform: rotate(-90deg); margin-left: auto; }
.hscroll { flex: none; height: 16px; background: #f0f0f0; display: flex; align-items: center; padding: 0 20px 0 3px; }
.hscroll .thumb { width: 115px; height: 14px; background: #cdcdcd; margin-left: 4px; }
.docktabs { flex: none; height: 25px; display: flex; align-items: center; padding: 0 4px 4px; gap: 9px; color: #444a55; }
.docktabs button { height: 20px; padding: 0 2px 0 1px; gap: 3px; font-size: 11px; }
.docktabs .sel { background: #f0f0f0; border: 1px solid #c2ecec; border-top: 0; border-radius: 0 0 3px 3px; }
.docktabs.icons { gap: 10px; }

.canvas { flex: 1; min-width: 0; position: relative; margin: 0 0 0 5px; background: #fff; border: 1px solid #d8dbe2; border-top: 2px solid #666; border-left: 1px solid #666; padding: 5px 4px; display: flex; flex-direction: column; justify-content: space-between; font: 11px/14px "Liberation Sans", sans-serif; }
.foot { display: flex; justify-content: space-between; padding: 0 6px 3px 0; }
.plot { position: absolute; right: -5px; top: 88px; }
.plot path { vector-effect: non-scaling-stroke; }
.bands path { stroke: #600; stroke-width: 1; }
.mesh { fill: none; stroke: #a0a0a0; stroke-dasharray: 1 1; shape-rendering: crispEdges; }
.contour { fill: none; stroke: #700000; stroke-width: 1; }
.rest { fill: none; stroke: #b4b4b4; stroke-dasharray: 11 4; }
.edge { fill: none; stroke: #7c7; stroke-dasharray: 1 1; }
.axis-l { stroke: #f00; stroke-width: 2; }
.dims { stroke: #000080; fill: none; }
.sup { fill: #00ff00; fill-opacity: .5; }
.dimtext { font: bold 11px "Liberation Sans", sans-serif; fill: #000060; text-anchor: middle; }

.panel { flex: none; width: 157px; margin-left: 7px; display: flex; flex-direction: column; }
.panelbody { flex: 1; background: #efefef; border: 1px solid #aab1be; border-width: 0 0 1px 1px; border-bottom-color: #777; padding: 5px 5px 4px; display: flex; flex-direction: column; font-family: "Liberation Sans", sans-serif; }
.panelbody p { line-height: 16px; }
sub { font-size: 9px; line-height: 0; vertical-align: -2px; }
.legend { height: 214px; margin-top: 2px; background: #faf7f0; border: 1px solid #fff; border-top-color: #888; border-left-color: #888; display: flex; padding: 10px 0 0 43px; }
.scale { width: 27px; height: 188px; border: 1px solid #000; border-top: 0; display: flex; flex-direction: column; }
.scale i { position: relative; height: 17px; border-top: 1px solid #000; }
.scale i::after { content: ""; position: absolute; left: 25px; top: -1px; width: 7px; height: 1px; background: #000; }
.scale i:nth-child(1) { background: #b90000; } .scale i:nth-child(2) { background: #f00; } .scale i:nth-child(3) { background: #ffa800; } .scale i:nth-child(4) { background: #d0d000; } .scale i:nth-child(5) { background: #ff0; } .scale i:nth-child(6) { background: #0f0; } .scale i:nth-child(7) { background: #00e887; } .scale i:nth-child(8) { background: #00f5f5; } .scale i:nth-child(9) { background: #00a0ff; } .scale i:nth-child(10) { background: #00f; } .scale i:nth-child(11) { background: #0000a8; }
.legend ol { margin: -9px 0 0 11px; line-height: 17px; }
.minmax { margin-top: 11px; height: 36px; border: 1px solid #dce6f4; border-right-color: #a8aae8; border-bottom-color: #a8aae8; background: #f0f3f8; display: grid; grid-template-columns: 26px 12px auto; line-height: 17px; padding-left: 43px; }
.zoomer { margin: 137px 0 0 auto; }

.status { flex: none; height: 21px; display: flex; padding: 2px 0 1px; background: linear-gradient(#cdd1d9, #a9aeb9 60%, #bcc1cb); border-top: 1px solid #9aa0ac; }
.modes { margin-left: auto; display: flex; gap: 2px; color: #333; font-size: 12px; }
.modes button { padding: 0 1px; border: 1px solid #eee; border-right-color: #777; border-bottom-color: #777; }
.modes .down { border-color: #000 #fff #fff #000; }
.status > i { border-left: 1px solid #999ea9; margin-left: 1px; }
.c1 { width: 187px; } .c2 { width: 87px; } .c3 { width: 73px; }

.dialog { position: absolute; background: #f0f0f0; border: 1px solid #777; box-shadow: 2px 3px 12px rgba(0, 0, 0, .35); font: 11px/14px "Liberation Sans", sans-serif; display: flex; flex-direction: column; }
.edit-bar { left: 230px; top: 147px; width: 622px; height: 500px; overflow: hidden; }
.edit-cable { left: 197px; top: 558px; width: 755px; height: 523px; border-color: #555; box-shadow: 2px 3px 14px rgba(0, 0, 0, .5); }
.dtitle { flex: none; height: 25px; background: #fff; display: flex; align-items: center; justify-content: space-between; padding: 0 9px 2px 3px; font: 11px/14px "Open Sans", "Noto Sans", sans-serif; }
.dtitle.inactive { color: #8c8c8c; }
.tabs { display: flex; align-items: flex-end; height: 28px; padding-left: 6px; margin-bottom: -1px; position: relative; }
.tabs button { height: 18px; border: 1px solid #d9d9d9; padding: 0 4px; margin-left: -1px; margin-bottom: 1px; }
.tabs .sel { height: 21px; background: #fff; border-bottom: 0; padding: 0 6px 3px; margin: 0; }
.page { flex: 1; margin: 0 8px 0 6px; background: #fff; border: 1px solid #dcdcdc; padding: 9px 5px 0 8px; }
.group { background: #f0f3f9; border: 1px solid #dce6f4; border-right-color: #a8aae8; border-bottom-color: #a8aae8; position: relative; }
.group h3 { height: 17px; margin: -1px -1px 0; padding: 1px 2px; background: linear-gradient(45deg, #dce6f5 calc(100% - 9px), #fff calc(100% - 9px)); border-bottom: 1px solid #fff; color: #1f3f6b; }
.params h3 { background: linear-gradient(45deg, #dce6f5 calc(100% - 9px), #f0f0f0 calc(100% - 9px)); }
.gridtop { display: grid; grid-template-columns: 109px 8px 182px 8px 1fr; grid-template-rows: 46px 47px 146px; row-gap: 9px; }
.g-num { grid-area: 1 / 1; } .g-lin { grid-area: 1 / 3; } .g-tipo { grid-area: 1 / 5; } .g-nudo { grid-area: 2 / 1 / 3 / 4; } .g-giro { grid-area: 3 / 1 / 4 / 4; } .g-prev { grid-area: 2 / 5 / 4 / 6; }
.gb { display: flex; gap: 4px; padding: 3px 2px; }
.gb .ro { height: 20px; width: 100%; border: 1px solid #777; background: #efefef; padding: 0 2px; box-shadow: inset 0 0 0 1px #fff; }
.gb .num { width: 45px; text-align: right; }
select { appearance: none; border-radius: 0; padding: 0 1px; opacity: 1; }
.combo { flex: 1; height: 21px; border: 1px solid #777; background: #fff; display: flex; align-items: center; padding: 0 20px 0 2px; position: relative; }
.combo select { flex: 1; min-width: 0; height: 19px; border: 0; background: none; }
.combo::after { content: ""; position: absolute; right: 8px; top: 5px; width: 6px; height: 6px; border: solid #444; border-width: 0 1px 1px 0; transform: rotate(45deg); pointer-events: none; }
.combo.w63 { flex: none; width: 63px; padding: 0 16px 0 1px; }
.combo.w63::after { right: 6px; }
.sw { width: 13px; height: 14px; border: 1px solid #444; margin-right: 3px; }
.peach { background: #eec39a; } .blue { background: #6699ff; } .violet { background: #6060ff; width: 11px; margin: 0 2px 0 0; }
.g-tipo .combo { flex: none; width: 218px; }
.sq { flex: none; width: 25px; height: 21px; background: #e1e1e1; border: 1px solid #adadad; }
.sq.off { background: #cccccc; border-color: #bfbfbf; filter: grayscale(1); }
.sq.off svg { opacity: .5; }
.dis { color: #8c8c8c; }
label { display: flex; align-items: center; gap: 3px; }
input[type=radio], input[type=checkbox] { flex: none; appearance: none; width: 13px; height: 13px; border: 1px solid #333; border-radius: 50%; background: #fff; }
input[type=radio]:checked { background: radial-gradient(circle, #222 0 3px, #fff 4px); }
input[type=radio]:disabled { border-color: #bbb; }
input[type=radio]:disabled:checked { background: radial-gradient(circle, #bbb 0 3px, #fff 4px); }
input[type=checkbox] { border-radius: 0; position: relative; }
input[type=checkbox]::after { content: ""; position: absolute; left: 3px; top: 0; width: 5px; height: 8px; border: solid #222; border-width: 0 1px 1px 0; transform: rotate(40deg); }
.giro { display: grid; grid-template-columns: 87px 30px 63px 1fr; row-gap: 10px; padding: 4px 2px; align-items: center; grid-auto-rows: 21px; }
.giro > label { white-space: nowrap; }
.giro > .beta { padding-left: 1px; }
.giro > span { padding-left: 25px; }
.giro .pair { display: flex; gap: 5px; padding-left: 4px; }
.giro .spin { width: 83px; }
.plano { display: grid; grid-template-columns: 74px auto; row-gap: 5px; padding: 10px 0 0 18px; }
.plano .xz { grid-column: 2; }
.ginfo { position: absolute; right: 3px; bottom: 3px; }
.offc { border-color: #bbb; color: #888; }
.offc::after { border-color: #aaa; }
.combo.empty select { background: #efefef; height: 15px; }
.spin { width: 83px; height: 20px; border: 1px solid #7a98b8; background: #fff; display: flex; align-items: center; padding: 1px; gap: 1px; }
.spin input { flex: 1; min-width: 0; border: 0; background: none; height: 16px; padding: 0 4px 0 0; text-align: right; }
.giro .spin input { padding: 0; }
.spin .ud { width: 12px; height: 16px; background: linear-gradient(#e8e8e8 7px, #999 7px 8px, #e8e8e8 8px); border: 1px solid #bbb; position: relative; }
.spin .ud::before, .spin .ud::after { content: ""; position: absolute; left: 2px; border: 3px solid transparent; }
.spin .ud::before { top: 1px; border-top: 0; border-bottom-color: #111; }
.spin .ud::after { bottom: 1px; border-bottom: 0; border-top-color: #111; }
.spin button { width: 9px; height: 16px; background: #e8e8e8; border: 1px solid #aaa; }
.spin button::after { content: ""; border: 3px solid transparent; border-left-color: #111; border-right: 0; }
.spin.dim { background: #f0f0f0; box-shadow: inset 0 0 0 1px #fff; }
.dim .ud::before { border-bottom-color: #666; } .dim .ud::after { border-top-color: #666; } .dim button::after { border-left-color: #666; }
.preview { background: linear-gradient(215deg, #fdf4dc, #fefbf0 50%, #fff); border: 1px solid #fff; border-top-color: #888; border-left-color: #888; position: relative; }
.g-prev span { position: absolute; left: 5px; top: 2px; }
.g-prev svg { display: block; }
.g-prev text { font: bold 9px "Liberation Sans", sans-serif; fill: #f0f; }
.g-sec { margin-top: 11px; height: 69px; }
.secrow { display: flex; align-items: center; gap: 5px; padding: 2px 3px 2px 2px; }
.secrow label { width: 73px; white-space: nowrap; }
.dot { width: 5px; height: 5px; border-radius: 50%; background: #3a4a80; margin: 0 10px 0 4px; }
.c-n { padding-right: 8px; border-right: 1px solid #444; } .c-s { padding: 0 4px; border-right: 1px solid #444; margin-right: 3px; }
.g-next { margin-top: 11px; height: 60px; }

.cablebody { flex: 1; min-height: 0; display: flex; gap: 9px; margin: 8px 8px 0; padding-bottom: 5px; border-bottom: 1px solid #888; }
.cableleft { width: 436px; display: flex; flex-direction: column; gap: 9px; }
.act { height: 35px; padding: 11px 2px; }
.focus { outline: 1px dotted #000; padding: 0 1px; margin-left: -1px; }
.params { flex: 1; }
.plist { padding: 6px 2px; }
.plist p { height: 21px; line-height: 20px; }
.main-opt { height: 24px; margin-bottom: 2px; }
.main-opt.fz { margin: 21px 0 1px; }
.prow { height: 21px; display: grid; grid-template-columns: 227px 30px 83px auto; padding-left: 16px; align-items: center; }
.prow.gap { margin-top: 16px; } .prow.sm { margin-top: 3px; }
.prow b { font-weight: normal; }
.prow > span { padding-left: 5px; }
.cablepic { flex: 1; }
.cablepic text { font: 15px "Liberation Sans", sans-serif; }
.dfoot { flex: none; height: 43px; display: flex; gap: 9px; align-items: center; padding: 4px 8px 0 9px; }
.fill { flex: 1; }
.btn { width: 73px; height: 21px; background: #e1e1e1; border: 1px solid #adadad; }
.btn.primary { border: 2px solid #0078d7; margin-right: 1px; }
.sq.dec { flex-direction: column; font: italic bold 9px/10px "Liberation Serif", serif; color: #223a6c; }
.ruler { width: 16px; height: 5px; background: repeating-linear-gradient(90deg, #6cc060 0 3px, #e8f8e0 3px 4px); }
```
